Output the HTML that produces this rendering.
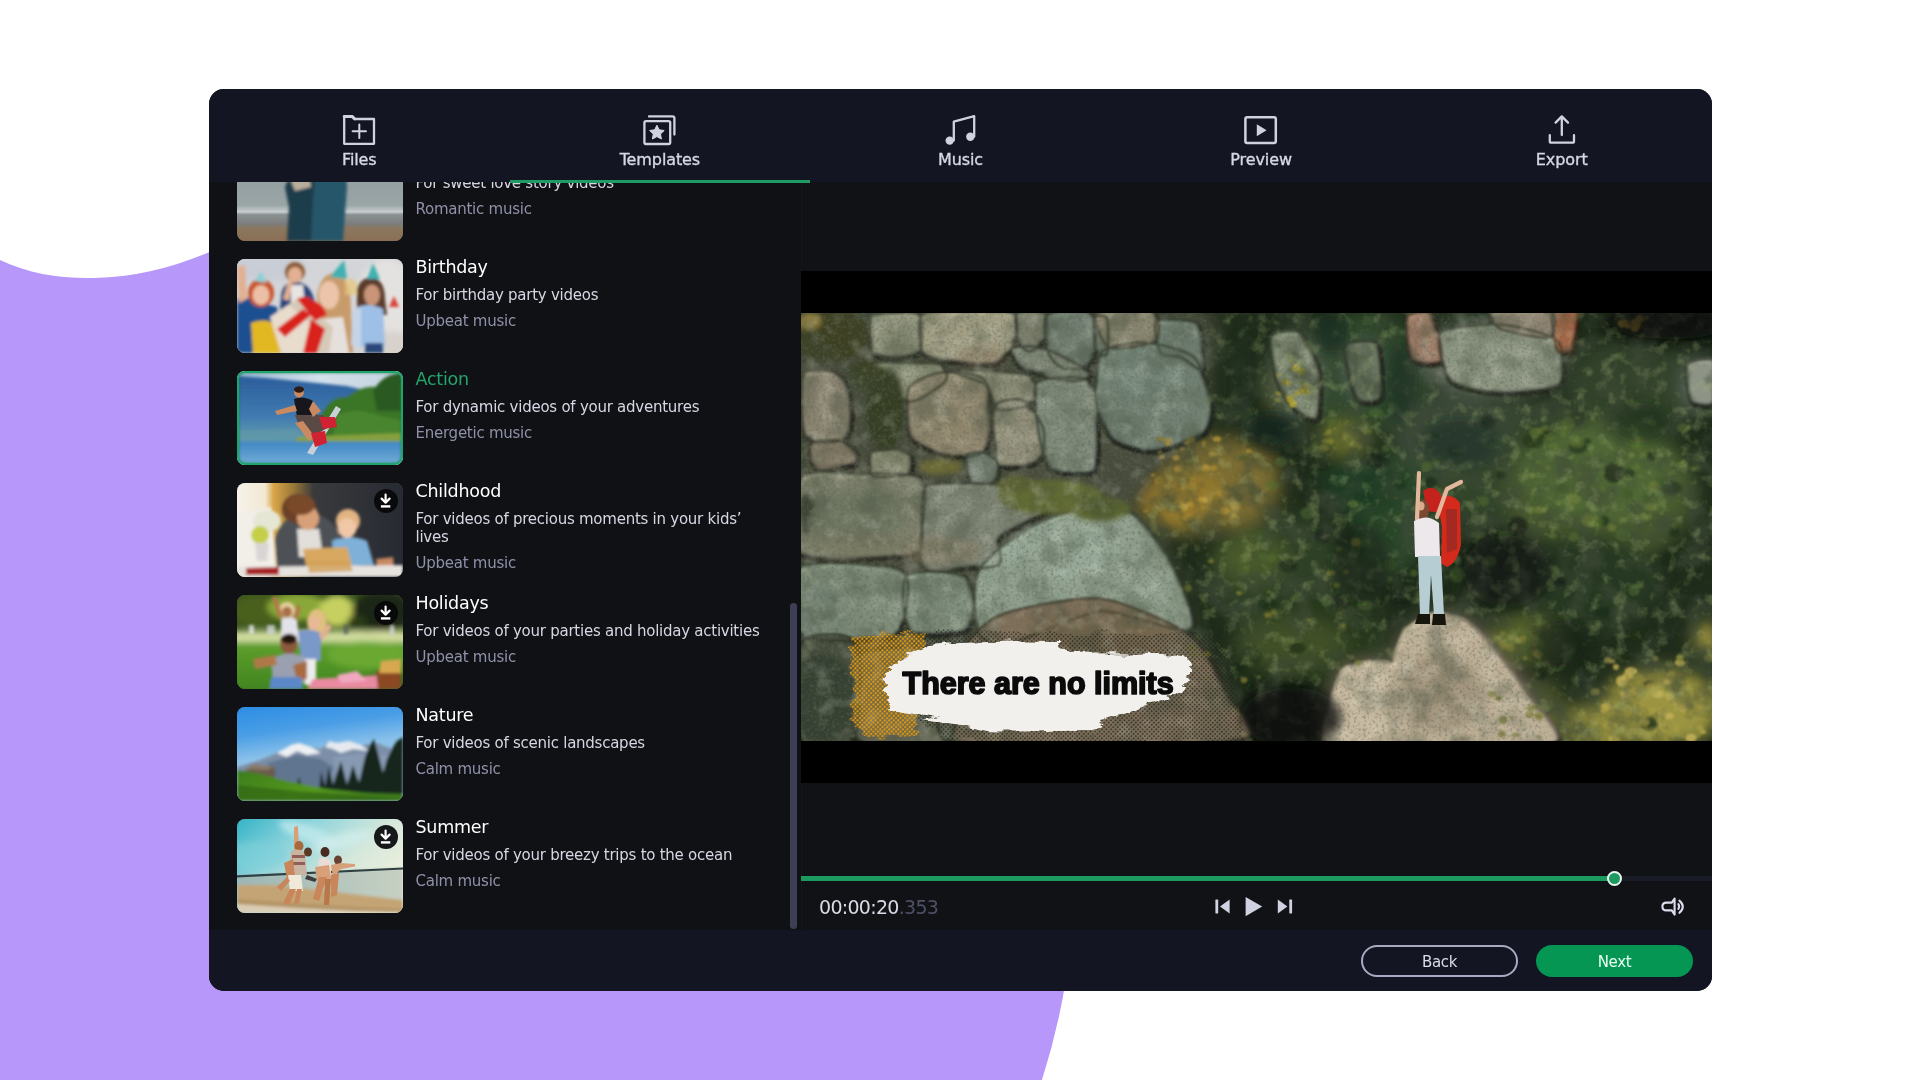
<!DOCTYPE html>
<html lang="en">
<head>
<meta charset="utf-8">
<title>Video editor – Templates</title>
<style>
*{box-sizing:border-box;margin:0;padding:0}
html,body{width:1920px;height:1080px;overflow:hidden;background:#fff}
body{position:relative;font-family:"DejaVu Sans","Liberation Sans",sans-serif;color:#fff}
.abs{position:absolute}
#bg{position:absolute;left:0;top:0;width:1920px;height:1080px}
#win{position:absolute;left:209px;top:89px;width:1503px;height:902px;border-radius:15px;overflow:hidden;background:#111215;will-change:transform}
#nav{position:absolute;left:0;top:0;width:1503px;height:93px;background:#131522}
.tab{position:absolute;top:0;width:300.6px;height:93px;text-align:center}
.tab svg{position:absolute;left:50%;top:22px;margin-left:-20px;width:40px;height:40px;overflow:visible}
.tab span{position:absolute;left:0;right:0;top:61px;font-size:16px;line-height:20px;color:#d6d8e7;letter-spacing:-0.1px;font-weight:400;-webkit-text-stroke:0.35px #d6d8e7}
#underline{position:absolute;left:301px;top:91px;width:300px;height:3px;background:#1f9b63;z-index:5}
#list{position:absolute;left:0;top:93px;width:592px;height:748px;background:#101114;overflow:hidden}
.item{position:absolute;left:28px;width:550px;height:94px}
.thumb{position:absolute;left:0;top:0;width:166px;height:94px;border-radius:8px;overflow:hidden;background:#555}
.thumb svg{position:absolute;left:0;top:0;width:166px;height:94px}
.item h3{position:absolute;left:178.5px;top:-4px;font-size:17.5px;line-height:24px;font-weight:400;color:#fff;letter-spacing:-0.25px;white-space:nowrap}
.item p{position:absolute;left:178.5px;top:26.6px;width:350px;font-size:15px;line-height:18px;color:#d6d7e4;letter-spacing:-0.25px}
.item p.m{color:#8f91a9;top:53px;white-space:nowrap}
.item.sel h3{color:#23a56c}
.item.sel .thumb{box-shadow:inset 0 0 0 2px #1fa46a}
.item.sel .thumb::after{content:"";position:absolute;left:0;top:0;right:0;bottom:0;border:2px solid #1fa46a;border-radius:8px;box-shadow:inset 0 0 3px rgba(20,120,80,.8)}
.dl{position:absolute;left:137px;top:6px;width:24px;height:24px;border-radius:12px;background:rgba(8,8,10,.93)}
#divider{position:absolute;left:592px;top:93px;width:1px;height:748px;background:#16171c}
#scroll{position:absolute;left:581px;top:421px;width:7px;height:326px;border-radius:4px;background:#3d3f57}
#prev{position:absolute;left:592px;top:93px;width:911px;height:748px;background:#111215}
#video{position:absolute;left:592px;top:182px;width:911px;height:512px;background:#000}
#frame{position:absolute;left:592px;top:224px;width:911px;height:428px;overflow:hidden;background:#4a5a3a}
#frame svg{position:absolute;left:0;top:0;width:911px;height:428px}
#track{position:absolute;left:592px;top:787px;width:911px;height:5px;background:#191b27}
#prog{position:absolute;left:592px;top:787px;width:813px;height:5px;background:#1c9a60;border-radius:0 3px 3px 0}
#knob{position:absolute;left:1398px;top:782px;width:15px;height:15px;border-radius:50%;background:#1c9a60;border:2.5px solid #e9f6ef}
#time{position:absolute;left:610px;top:806px;font-size:19px;line-height:24px;letter-spacing:-0.7px;color:#d9dbe6}
#time i{font-style:normal;color:#4e5166}
#bar{position:absolute;left:0;top:841px;width:1503px;height:61px;background:#131522}
.btn{position:absolute;top:855.5px;height:32.5px;width:157px;border-radius:17px;font-size:15px;line-height:35px;text-align:center;color:#e8fff2;letter-spacing:-0.3px}
#back{left:1152px;border:2px solid #a9aac2;line-height:31px;color:#dcddea}
#next{left:1327px;background:#069654}
.ctl{position:absolute;overflow:visible}
</style>
</head>
<body>
<svg id="bg" viewBox="0 0 1920 1080">
  <rect width="1920" height="1080" fill="#ffffff"/>
  <path d="M0,260 C30,274 62,279 95,278 C135,277 172,268 212,251 L1100,251 L1066.5,975 Q1058.8,1027.5 1041.9,1080 L0,1080 Z" fill="#b897fb"/>
</svg>

<div id="win">
  <div id="list">
    <!-- items inserted below -->
    <div class="item" style="top:-35px">
      <div class="thumb" id="t0"><svg viewBox="0 0 166 94" width="166" height="94" preserveAspectRatio="none">
<defs>
<filter id="t0b3" x="-20%" y="-20%" width="140%" height="140%"><feGaussianBlur stdDeviation="3"/></filter>
<filter id="t0b15" x="-20%" y="-20%" width="140%" height="140%"><feGaussianBlur stdDeviation="1.5"/></filter>
<filter id="t0b07" x="-20%" y="-20%" width="140%" height="140%"><feGaussianBlur stdDeviation="0.7"/></filter>
<linearGradient id="t0g" x1="0" y1="0" x2="0" y2="1"><stop offset="0" stop-color="#8d999c"/><stop offset="0.62" stop-color="#9aa5a6"/><stop offset="0.69" stop-color="#c9cfcf"/><stop offset="0.72" stop-color="#8b9192"/><stop offset="0.82" stop-color="#7b7d7c"/><stop offset="0.86" stop-color="#8c775f"/><stop offset="1" stop-color="#8a6f56"/></linearGradient>
</defs>
<rect x="0" y="0" width="166" height="94" fill="url(#t0g)"/>
<g filter="url(#t0b15)">
<path d="M48,40 Q52,28 62,26 L74,28 Q80,34 82,48 L84,94 L50,94 L52,60 Z" fill="#1d3c4c"/>
<path d="M78,30 Q86,18 100,20 Q110,24 110,40 L106,94 L74,94 L76,56 Z" fill="#27566a"/>
<path d="M54,34 Q60,24 72,28 L74,40 L58,44 Z" fill="#b9ae9c"/>
<ellipse cx="68" cy="26" rx="6" ry="7" fill="#3a2a22"/>
<ellipse cx="84" cy="22" rx="7" ry="8" fill="#2a2420"/>
</g>
</svg></div>
      <h3>Love story</h3>
      <p style="white-space:nowrap">For sweet love story videos</p>
      <p class="m">Romantic music</p>
    </div>
    <div class="item" style="top:77px">
      <div class="thumb" id="t1"><svg viewBox="0 0 166 94" width="166" height="94" preserveAspectRatio="none">
<defs>
<filter id="t1b3" x="-20%" y="-20%" width="140%" height="140%"><feGaussianBlur stdDeviation="3"/></filter>
<filter id="t1b15" x="-20%" y="-20%" width="140%" height="140%"><feGaussianBlur stdDeviation="1.5"/></filter>
<filter id="t1b07" x="-20%" y="-20%" width="140%" height="140%"><feGaussianBlur stdDeviation="0.7"/></filter>

</defs>
<rect x="0" y="0" width="166" height="94" fill="#d3d5d9"/>
<g filter="url(#t1b3)">
<ellipse cx="150" cy="40" rx="30" ry="40" fill="#e4e2e0"/>
<ellipse cx="30" cy="8" rx="40" ry="14" fill="#c9cdd6"/>
<ellipse cx="150" cy="86" rx="30" ry="14" fill="#d8d2cc"/>
</g>
<g filter="url(#t1b15)">
<path d="M44,40 Q44,24 58,22 Q74,24 78,44 L78,60 L42,60 Z" fill="#27457a"/>
<path d="M54,26 L66,26 L68,46 L54,46 Z" fill="#e8e4e2"/>
<ellipse cx="58" cy="13" rx="10" ry="10" fill="#8a5a34"/>
<ellipse cx="58" cy="16" rx="7" ry="8" fill="#e2b092"/>
<path d="M46,40 L52,20 L56,22 L52,42 Z" fill="#e2b092"/>
<path d="M0,40 Q10,36 18,42 L40,48 L44,70 L36,94 L0,94 Z" fill="#1e4f8f"/>
<path d="M14,64 Q28,58 40,66 L46,94 L16,94 Z" fill="#e2b820"/>
<path d="M0,8 L8,6 L10,40 L2,44 Z" fill="#e2b092"/>
<ellipse cx="24" cy="34" rx="13" ry="14" fill="#c8552a"/>
<ellipse cx="24" cy="36" rx="8.5" ry="10" fill="#ecc0a6"/>
<path d="M18,22 L24,12 L30,24 Z" fill="#8fd0d4"/>
<path d="M80,36 Q84,14 98,14 Q114,18 114,50 L116,94 L84,94 Z" fill="#c89b6a"/>
<ellipse cx="92" cy="36" rx="10" ry="14" fill="#ecc4aa"/>
<path d="M84,60 L106,58 L112,94 L84,94 Z" fill="#e6e0dc"/>
<path d="M93,18 L107,1 L110,20 Z" fill="#3fb0b0"/>
<path d="M33,58 L60,40 L96,68 L92,94 L44,94 Z" fill="#e8dccd"/>
<path d="M60,40 L96,68 L92,94 L78,94 L82,72 L52,46 Z" fill="#cfc0ae" opacity="0.7"/>
<path d="M40,70 L66,50 L74,56 L48,78 Z" fill="#d9231f"/>
<path d="M60,40 Q70,34 76,42 Q86,44 90,56 L78,62 Z" fill="#d9231f"/>
<path d="M74,60 L88,70 L80,94 L66,94 Z" fill="#d9231f"/>
<path d="M120,30 Q124,18 136,18 Q148,22 148,40 L150,56 L120,56 Z" fill="#5a3a2a"/>
<ellipse cx="135" cy="36" rx="8" ry="10.5" fill="#c99477"/>
<path d="M118,50 Q130,42 146,50 L148,88 L118,88 Z" fill="#9ec0e6"/>
<path d="M116,52 L124,48 L124,90 L114,86 Z" fill="#c6d4e8"/>
<path d="M128,84 L146,84 L146,94 L128,94 Z" fill="#2b4a7a"/>
<path d="M130,20 L136,4 L143,20 Z" fill="#3fb0b0"/>
<path d="M152,48 L157,37 L162,48 Z" fill="#d9433a"/>
<path d="M108,22 Q114,16 120,24 L120,36 L108,36 Z" fill="#e8c878" opacity="0.7"/>
</g>
</svg></div>
      <h3>Birthday</h3>
      <p>For birthday party videos</p>
      <p class="m">Upbeat music</p>
    </div>
    <div class="item sel" style="top:189px">
      <div class="thumb" id="t2"><svg viewBox="0 0 166 94" width="166" height="94" preserveAspectRatio="none">
<defs>
<filter id="t2b3" x="-20%" y="-20%" width="140%" height="140%"><feGaussianBlur stdDeviation="3"/></filter>
<filter id="t2b15" x="-20%" y="-20%" width="140%" height="140%"><feGaussianBlur stdDeviation="1.5"/></filter>
<filter id="t2b07" x="-20%" y="-20%" width="140%" height="140%"><feGaussianBlur stdDeviation="0.7"/></filter>
<linearGradient id="t2sky" x1="0" y1="0" x2="1" y2="0"><stop offset="0" stop-color="#9bb8d4"/><stop offset="0.5" stop-color="#d4e0ea"/><stop offset="1" stop-color="#c2d2e0"/></linearGradient><linearGradient id="t2m" x1="0" y1="0" x2="0" y2="1"><stop offset="0" stop-color="#2b5d9c"/><stop offset="0.6" stop-color="#3f7ab0"/><stop offset="1" stop-color="#6aa0ac"/></linearGradient><linearGradient id="t2w" x1="0" y1="0" x2="0" y2="1"><stop offset="0" stop-color="#3f86c4"/><stop offset="1" stop-color="#74afd9"/></linearGradient>
</defs>
<rect x="0" y="0" width="166" height="94" fill="url(#t2sky)"/>
<g filter="url(#t2b15)">
<path d="M0,5 L30,7 L70,11 L110,15 L140,22 L166,30 L166,72 L0,72 Z" fill="url(#t2m)"/>
<path d="M86,40 Q96,24 110,26 Q124,14 140,16 Q150,2 166,4 L166,70 L70,70 Z" fill="#3a7428"/>
<path d="M136,20 Q146,2 166,2 L166,40 L140,40 Z" fill="#2a5a20"/>
<path d="M100,44 Q120,36 140,44 L166,50 L166,66 L96,66 Z" fill="#4e8a30" opacity="0.8"/>
<path d="M58,66 L166,62 L166,72 L58,72 Z" fill="#86a03c"/>
<path d="M0,60 L60,58 L60,70 L0,70 Z" fill="#5f97a8" opacity="0.8"/>
<rect x="0" y="70.5" width="166" height="24" fill="url(#t2w)"/>
</g>
<g filter="url(#t2b07)">
<path d="M99,35 L104,38 L76,84 L70,82 Z" fill="#c9d0d8"/>
<path d="M57,28 Q66,24 76,30 L80,44 L60,46 Z" fill="#15151a"/>
<path d="M58,44 L86,44 L92,56 L78,64 L64,60 Z" fill="#5a4a44"/>
<path d="M58,52 L66,50 L78,66 L72,70 Z" fill="#c98a62"/>
<path d="M76,30 L84,40 L76,46 L72,38 Z" fill="#c98a62"/>
<path d="M38,40 L58,34 L60,40 L40,44 Z" fill="#c98a62"/>
<ellipse cx="62" cy="21" rx="5" ry="5.6" fill="#c98a62"/>
<ellipse cx="62" cy="18.5" rx="5" ry="3.2" fill="#2a1c14"/>
<path d="M82,46 L98,46 L100,56 L86,58 Z" fill="#d02030"/>
<path d="M74,62 L88,60 L90,72 L78,76 Z" fill="#d02030"/>
</g>
</svg></div>
      <h3>Action</h3>
      <p>For dynamic videos of your adventures</p>
      <p class="m">Energetic music</p>
    </div>
    <div class="item" style="top:301px">
      <div class="thumb" id="t3"><svg viewBox="0 0 166 94" width="166" height="94" preserveAspectRatio="none">
<defs>
<filter id="t3b3" x="-20%" y="-20%" width="140%" height="140%"><feGaussianBlur stdDeviation="3"/></filter>
<filter id="t3b15" x="-20%" y="-20%" width="140%" height="140%"><feGaussianBlur stdDeviation="1.5"/></filter>
<filter id="t3b07" x="-20%" y="-20%" width="140%" height="140%"><feGaussianBlur stdDeviation="0.7"/></filter>
<linearGradient id="t3bg" x1="0" y1="0" x2="1" y2="0"><stop offset="0" stop-color="#f6f2ea"/><stop offset="0.17" stop-color="#f2e8d2"/><stop offset="0.22" stop-color="#d9a548"/><stop offset="0.34" stop-color="#9a7838"/><stop offset="0.46" stop-color="#3a3a3c"/><stop offset="1" stop-color="#262a32"/></linearGradient>
</defs>
<rect x="0" y="0" width="166" height="94" fill="url(#t3bg)"/>
<g filter="url(#t3b15)">
<path d="M0,30 L34,24 L40,94 L0,94 Z" fill="#f2eee8"/>
<ellipse cx="30" cy="38" rx="14" ry="11" fill="#e6e6d4"/>
<ellipse cx="23" cy="52" rx="9" ry="9" fill="#c4cf46"/>
<path d="M18,60 L32,60 L30,78 L20,78 Z" fill="#d8d6d4"/>
<path d="M38,56 Q44,34 66,30 Q94,30 102,52 L104,84 L40,86 Z" fill="#4d5157"/>
<path d="M60,46 L82,46 L86,74 L62,74 Z" fill="#e2deda"/>
<ellipse cx="62" cy="26" rx="17" ry="15" fill="#6a4028"/>
<ellipse cx="71" cy="35" rx="11" ry="12" fill="#d8a078"/>
<ellipse cx="64" cy="22" rx="14" ry="10" fill="#7a4a2c"/>
<path d="M95,58 Q112,50 130,58 L137,82 L98,84 Z" fill="#7eb0d8"/>
<ellipse cx="111" cy="38" rx="12" ry="12" fill="#e2b482"/>
<ellipse cx="110" cy="45" rx="9.5" ry="10" fill="#f0c8a8"/>
<path d="M66,66 L110,64 L116,86 L70,88 Z" fill="#d8a860"/>
<path d="M139,76 L156,74 L157,84 L140,85 Z" fill="#c88860"/>
<path d="M0,84 L166,82 L166,94 L0,94 Z" fill="#e6e2de"/>
<path d="M9,85 L42,84 L42,92 L9,92 Z" fill="#a82424"/>
<path d="M70,78 L112,78 L116,88 L72,90 Z" fill="#d2a058" opacity="0.8"/>
</g>
</svg></div>
      <div class="dl"></div>
      <h3>Childhood</h3>
      <p>For videos of precious moments in your kids’ lives</p>
      <p class="m" style="top:71px">Upbeat music</p>
    </div>
    <div class="item" style="top:413px">
      <div class="thumb" id="t4"><svg viewBox="0 0 166 94" width="166" height="94" preserveAspectRatio="none">
<defs>
<filter id="t4b3" x="-20%" y="-20%" width="140%" height="140%"><feGaussianBlur stdDeviation="3"/></filter>
<filter id="t4b15" x="-20%" y="-20%" width="140%" height="140%"><feGaussianBlur stdDeviation="1.5"/></filter>
<filter id="t4b07" x="-20%" y="-20%" width="140%" height="140%"><feGaussianBlur stdDeviation="0.7"/></filter>
<linearGradient id="t4g" x1="0" y1="0" x2="0" y2="1"><stop offset="0" stop-color="#5fa02c"/><stop offset="1" stop-color="#3f8420"/></linearGradient>
</defs>
<rect x="0" y="0" width="166" height="94" fill="#38541c"/>
<g filter="url(#t4b3)">
<ellipse cx="20" cy="16" rx="26" ry="16" fill="#4a5e1c"/>
<ellipse cx="60" cy="12" rx="30" ry="14" fill="#8aa838"/>
<ellipse cx="100" cy="16" rx="18" ry="16" fill="#c6d060"/>
<ellipse cx="145" cy="16" rx="30" ry="20" fill="#1c2812"/>
<ellipse cx="120" cy="28" rx="10" ry="8" fill="#2a3a16"/>
<rect x="-5" y="36" width="180" height="11" fill="#d4dea0"/>
<rect x="-5" y="47" width="180" height="50" fill="url(#t4g)"/>
<ellipse cx="130" cy="60" rx="40" ry="14" fill="#6aa832"/>
<ellipse cx="150" cy="88" rx="30" ry="10" fill="#3a6a1c"/>
</g>
<g filter="url(#t4b15)">
<rect x="12" y="30" width="5" height="9" fill="#e8e8f0" opacity="0.8"/>
<rect x="30" y="30" width="8" height="9" fill="#e0e0e8" opacity="0.7"/>
<rect x="107" y="30" width="4" height="9" fill="#5a5a68" opacity="0.8"/>
<rect x="153" y="30" width="4" height="10" fill="#d8d8e0" opacity="0.8"/>
<ellipse cx="80" cy="27" rx="10" ry="13" fill="#e0c080"/>
<ellipse cx="77" cy="28" rx="5.5" ry="7" fill="#e8b898"/>
<path d="M61,36 Q72,32 84,38 L84,66 L64,66 Z" fill="#7a98c8"/>
<path d="M67,64 L79,64 L79,90 L68,90 Z" fill="#ececec"/>
<path d="M82,40 L92,28 L95,32 L86,46 Z" fill="#e0b090"/>
<path d="M44,24 Q52,20 60,24 L62,46 L44,46 Z" fill="#e2e2ea"/>
<ellipse cx="50" cy="15" rx="8" ry="8" fill="#e8d0a0"/>
<ellipse cx="50" cy="17" rx="5" ry="5.5" fill="#a8704a"/>
<path d="M35,2 L40,2 L46,22 L42,24 Z" fill="#b07848"/>
<path d="M56,22 L60,10 L64,12 L60,26 Z" fill="#b07848"/>
<ellipse cx="52" cy="49" rx="8.5" ry="10.5" fill="#8a5a3a"/>
<ellipse cx="52" cy="44" rx="8" ry="5" fill="#241810"/>
<path d="M34,64 Q50,54 68,62 L68,88 L36,88 Z" fill="#9aa0b0"/>
<path d="M16,64 L38,60 L40,70 L18,74 Z" fill="#b07848"/>
<path d="M56,70 L70,66 L70,84 L60,86 Z" fill="#a86a40"/>
<path d="M34,82 L64,82 L66,94 L32,94 Z" fill="#5a88c8"/>
<path d="M76,84 L144,80 L150,94 L70,94 Z" fill="#e88aa0"/>
<path d="M100,80 L120,76 L130,86 L104,88 Z" fill="#f0a8c0"/>
<path d="M139,76 L164,74 L164,94 L141,94 Z" fill="#8a4a20"/>
<path d="M144,66 L164,64 L164,78 L142,78 Z" fill="#d8a850"/>
</g>
</svg></div>
      <div class="dl"></div>
      <h3>Holidays</h3>
      <p style="white-space:nowrap">For videos of your parties and holiday activities</p>
      <p class="m">Upbeat music</p>
    </div>
    <div class="item" style="top:525px">
      <div class="thumb" id="t5"><svg viewBox="0 0 166 94" width="166" height="94" preserveAspectRatio="none">
<defs>
<filter id="t5b3" x="-20%" y="-20%" width="140%" height="140%"><feGaussianBlur stdDeviation="3"/></filter>
<filter id="t5b15" x="-20%" y="-20%" width="140%" height="140%"><feGaussianBlur stdDeviation="1.5"/></filter>
<filter id="t5b07" x="-20%" y="-20%" width="140%" height="140%"><feGaussianBlur stdDeviation="0.7"/></filter>
<linearGradient id="t5s" x1="0" y1="0" x2="0.25" y2="1"><stop offset="0" stop-color="#2d8de3"/><stop offset="0.3" stop-color="#4a9ee6"/><stop offset="0.55" stop-color="#8cc2ea"/><stop offset="1" stop-color="#a8d0ee"/></linearGradient><linearGradient id="t5g" x1="0" y1="0" x2="1" y2="0.4"><stop offset="0" stop-color="#3c7c1c"/><stop offset="0.6" stop-color="#56981f"/><stop offset="1" stop-color="#3f7a1a"/></linearGradient>
</defs>
<rect x="0" y="0" width="166" height="94" fill="url(#t5s)"/>
<g filter="url(#t5b15)">
<path d="M0,60 L20,54 L40,46 L54,38 L62,36 L74,40 L84,42 L92,34 L100,36 L112,34 L124,38 L140,36 L150,40 L166,44 L166,90 L0,90 Z" fill="#7d8fa8"/>
<path d="M40,46 L54,38 L62,36 L74,40 L84,46 L70,48 L60,44 L50,50 Z" fill="#eef1f4"/>
<path d="M88,40 L92,34 L100,36 L112,34 L124,38 L132,44 L116,42 L104,46 L96,42 Z" fill="#e6eaf0"/>
<path d="M30,56 L60,48 L84,52 L96,60 L90,80 L40,80 Z" fill="#5c708c" opacity="0.85"/>
<path d="M96,50 L130,46 L166,50 L166,70 L100,72 Z" fill="#8a9cb4" opacity="0.8"/>
<path d="M82,84 L84,64 L88,80 L92,60 L96,78 L104,54 L110,78 L116,58 L122,76 L128,50 L132,40 L137,32 L142,50 L146,66 L150,52 L156,40 L160,34 L166,30 L166,90 L82,90 Z" fill="#13251a"/>
<path d="M58,82 L62,70 L66,82 Z" fill="#1f3a1c"/>
<path d="M7,64 L16,57 L38,60 L38,72 L22,72 L10,68 Z" fill="#6a5a4a"/>
<path d="M7,64 L16,57 L38,60 L30,63 L14,62 Z" fill="#8a7c6a"/>
<path d="M0,63 L20,66 L50,74 L90,82 L130,86 L166,87 L166,94 L0,94 Z" fill="url(#t5g)"/>
<path d="M0,78 L60,84 L166,92 L166,94 L0,94 Z" fill="#2f6416" opacity="0.7"/>
</g>
</svg></div>
      <h3>Nature</h3>
      <p>For videos of scenic landscapes</p>
      <p class="m">Calm music</p>
    </div>
    <div class="item" style="top:637px">
      <div class="thumb" id="t6"><svg viewBox="0 0 166 94" width="166" height="94" preserveAspectRatio="none">
<defs>
<filter id="t6b3" x="-20%" y="-20%" width="140%" height="140%"><feGaussianBlur stdDeviation="3"/></filter>
<filter id="t6b15" x="-20%" y="-20%" width="140%" height="140%"><feGaussianBlur stdDeviation="1.5"/></filter>
<filter id="t6b07" x="-20%" y="-20%" width="140%" height="140%"><feGaussianBlur stdDeviation="0.7"/></filter>
<linearGradient id="t6s" x1="0" y1="0" x2="1" y2="0.6"><stop offset="0" stop-color="#35b4c6"/><stop offset="0.35" stop-color="#8fd4dc"/><stop offset="0.7" stop-color="#d6e8dc"/><stop offset="1" stop-color="#eef0dc"/></linearGradient><linearGradient id="t6w" x1="0" y1="0" x2="1" y2="0"><stop offset="0" stop-color="#9cb6b4"/><stop offset="1" stop-color="#c6d0c2"/></linearGradient>
</defs>
<rect x="0" y="0" width="166" height="94" fill="url(#t6s)"/>
<g filter="url(#t6b3)">
<ellipse cx="70" cy="14" rx="30" ry="8" fill="#c8ecf0" opacity="0.7" transform="rotate(20 70 14)"/>
<ellipse cx="105" cy="22" rx="30" ry="7" fill="#d4f0ee" opacity="0.7" transform="rotate(-15 105 22)"/>
<ellipse cx="20" cy="36" rx="30" ry="14" fill="#7fd0d8" opacity="0.6"/>
</g>
<g filter="url(#t6b15)">
<path d="M0,57 L166,49 L166,94 L0,94 Z" fill="url(#t6w)"/>
<path d="M0,66 L40,66 L90,72 L140,78 L166,81 L166,94 L0,94 Z" fill="#c4a474"/>
<path d="M0,80 L60,84 L120,88 L166,90 L166,94 L0,94 Z" fill="#b39466"/>
<path d="M0,85 L60,89 L120,92 L166,93 L166,94 L0,94 Z" fill="#e8e0d0" opacity="0.75"/>
</g>
<g filter="url(#t6b07)">
<path d="M0,56.2 L166,48.6 L166,50.4 L0,58.4 Z" fill="#2f3f42"/>
<path d="M57,8 L61,7 L62,30 L57,32 Z" fill="#d8a078"/>
<ellipse cx="62" cy="27" rx="4.5" ry="5" fill="#a8683c"/>
<path d="M54,32 Q62,28 68,34 L70,56 L52,56 Z" fill="#c8b4a0"/>
<path d="M55,36 L68,36 L68,39 L55,39 Z M55,43 L68,43 L68,46 L55,46 Z" fill="#7a3a3a" opacity="0.7"/>
<ellipse cx="71" cy="33" rx="4" ry="4.5" fill="#5a3828"/>
<path d="M47,44 L56,40 L58,58 L50,60 Z" fill="#c8865a"/>
<path d="M51,56 L64,56 L66,72 L53,72 Z" fill="#f0e8d8"/>
<path d="M53,70 L59,70 L52,86 L46,84 Z" fill="#c8865a"/>
<path d="M60,70 L65,70 L62,84 L57,86 Z" fill="#c8865a"/>
<path d="M40,68 L50,58 L53,62 L44,72 Z" fill="#c8865a"/>
<ellipse cx="88" cy="33" rx="4.5" ry="5" fill="#4a2c20"/>
<path d="M82,40 Q88,36 94,42 L94,56 L80,56 Z" fill="#e8dcd4"/>
<path d="M78,48 L92,46 L94,60 L80,62 Z" fill="#d8a078"/>
<path d="M82,58 L90,58 L82,82 L76,80 Z" fill="#c8865a"/>
<path d="M88,60 L94,60 L92,86 L87,86 Z" fill="#b8764a"/>
<ellipse cx="101" cy="41" rx="4" ry="4.6" fill="#6a4030"/>
<path d="M94,46 L104,44 L118,45 L118,47.5 L104,50 L96,58 Z" fill="#d8a078"/>
<path d="M94,56 L102,54 L100,76 L94,78 Z" fill="#c8865a"/>
<path d="M70,56 L80,60 L78,63 L68,60 Z" fill="#3a3a40"/>
</g>
</svg></div>
      <div class="dl"></div>
      <h3>Summer</h3>
      <p>For videos of your breezy trips to the ocean</p>
      <p class="m">Calm music</p>
    </div>
    <div id="scroll"></div>
  </div>

  <div id="prev"></div>
  <div id="divider"></div>
  <div id="video"></div>
  <div id="frame"><svg viewBox="0 0 911 428" width="911" height="428" preserveAspectRatio="none">
<defs>
<filter id="fb9" x="-20%" y="-20%" width="140%" height="140%"><feGaussianBlur stdDeviation="9"/></filter>
<filter id="fb5" x="-20%" y="-20%" width="140%" height="140%"><feGaussianBlur stdDeviation="5"/></filter>
<filter id="fb3" x="-20%" y="-20%" width="140%" height="140%"><feGaussianBlur stdDeviation="2.6"/></filter>
<filter id="fb1" x="-20%" y="-20%" width="140%" height="140%"><feGaussianBlur stdDeviation="1.2"/></filter>
<filter id="fb06" x="-20%" y="-20%" width="140%" height="140%"><feGaussianBlur stdDeviation="0.6"/></filter>
<filter id="bump" x="-2%" y="-2%" width="104%" height="104%" color-interpolation-filters="sRGB">
  <feGaussianBlur in="SourceAlpha" stdDeviation="2.6" result="a"/>
  <feDiffuseLighting in="a" surfaceScale="11" diffuseConstant="1.0" lighting-color="#ffffff" result="l"><feDistantLight azimuth="240" elevation="58"/></feDiffuseLighting>
  <feComposite in="SourceGraphic" in2="l" operator="arithmetic" k1="0.82" k2="0.30" k3="0" k4="0" result="lit"/>
  <feComposite in="lit" in2="SourceAlpha" operator="in" result="c"/>
  <feGaussianBlur in="c" stdDeviation="1.1"/>
</filter>
<filter id="texD" x="0" y="0" width="100%" height="100%"><feTurbulence type="fractalNoise" baseFrequency="0.035" numOctaves="4" seed="3"/><feColorMatrix type="matrix" values="0 0 0 0 0.05  0 0 0 0 0.07  0 0 0 0 0.04  3.2 0 0 0 -1.35"/></filter>
<filter id="texL" x="0" y="0" width="100%" height="100%"><feTurbulence type="fractalNoise" baseFrequency="0.06" numOctaves="4" seed="11"/><feColorMatrix type="matrix" values="0 0 0 0 0.78  0 0 0 0 0.80  0 0 0 0 0.68  0 3.0 0 0 -1.45"/></filter>
<filter id="texG" x="0" y="0" width="100%" height="100%"><feTurbulence type="fractalNoise" baseFrequency="0.32" numOctaves="2" seed="8"/><feColorMatrix type="matrix" values="0 0 0 0 0.12  0 0 0 0 0.13  0 0 0 0 0.10  2.6 0 0 0 -1.25"/></filter>
<filter id="texF" x="0" y="0" width="100%" height="100%"><feTurbulence type="fractalNoise" baseFrequency="0.075" numOctaves="3" seed="21"/><feColorMatrix type="matrix" values="0 0 0 0 0.40  0 0 0 0 0.48  0 0 0 0 0.19  0 3.4 0 0 -1.75"/></filter>
<filter id="rough" x="-5%" y="-20%" width="110%" height="140%"><feTurbulence type="fractalNoise" baseFrequency="0.045 0.16" numOctaves="3" seed="5" result="n"/><feDisplacementMap in="SourceGraphic" in2="n" scale="13" xChannelSelector="R" yChannelSelector="G"/></filter>
<pattern id="dots" width="3.2" height="3.2" patternUnits="userSpaceOnUse" patternTransform="rotate(45)"><circle cx="1.6" cy="1.6" r="1.15" fill="#e39a12"/></pattern>
<pattern id="dotsk" width="3.2" height="3.2" patternUnits="userSpaceOnUse" patternTransform="rotate(45)"><circle cx="1.6" cy="1.6" r="0.95" fill="#20221c"/></pattern>
<mask id="mrocks" maskUnits="userSpaceOnUse" x="0" y="0" width="911" height="428"><g filter="url(#fb5)" fill="#fff"><path d="M0,0 L412,0 L408,60 L400,116 L350,164 L330,196 L368,250 L392,320 L426,380 L440,428 L0,428 Z"/><path d="M526,428 L530,385 L542,356 L570,348 L592,352 L603,318 L632,300 L664,306 L690,330 L730,382 L754,428 Z"/><path d="M608,0 L776,0 L772,40 L760,78 L700,84 L640,72 L608,50 Z"/><path d="M470,24 L500,20 L520,60 L518,108 L496,100 L476,70 Z"/></g></mask>
<mask id="mforest" maskUnits="userSpaceOnUse" x="0" y="0" width="911" height="428"><rect width="911" height="428" fill="#fff"/><g filter="url(#fb5)" fill="#000"><path d="M0,0 L412,0 L408,60 L400,116 L350,164 L330,196 L368,250 L392,320 L426,380 L440,428 L0,428 Z"/><path d="M526,428 L530,385 L542,356 L570,348 L592,352 L603,318 L632,300 L664,306 L690,330 L730,382 L754,428 Z"/><path d="M608,0 L776,0 L772,40 L760,78 L700,84 L640,72 L608,50 Z"/></g></mask>
<clipPath id="rocksall"><path d="M0,0 L418,0 L412,60 L404,118 L352,168 L334,196 L372,250 L396,320 L430,380 L444,428 L0,428 Z"/><path d="M526,428 L530,385 L542,356 L570,348 L592,352 L603,318 L632,300 L664,306 L690,330 L730,382 L754,428 Z"/><path d="M608,0 L776,0 L772,40 L760,78 L700,84 L640,72 L608,50 Z"/><path d="M470,24 L500,20 L520,60 L518,108 L496,100 L476,70 Z"/></clipPath>
<clipPath id="forestclip"><path d="M418,0 L911,0 L911,428 L754,428 L730,382 L690,330 L664,306 L632,300 L603,318 L592,352 L570,348 L542,356 L530,385 L526,428 L444,428 L430,380 L396,320 L372,250 L334,196 L352,168 L404,118 L412,60 Z"/></clipPath>
</defs>
<rect width="911" height="428" fill="#1f2c1b"/>
<g filter="url(#fb9)">
<ellipse cx="560" cy="60" rx="70" ry="60" fill="#2f4629"/>
<ellipse cx="700" cy="150" rx="110" ry="60" fill="#33452b"/>
<ellipse cx="800" cy="180" rx="95" ry="70" fill="#46592f"/>
<ellipse cx="835" cy="75" rx="70" ry="50" fill="#33432a"/>
<ellipse cx="860" cy="12" rx="60" ry="22" fill="#151b11"/>
<ellipse cx="480" cy="260" rx="70" ry="60" fill="#2d4026"/>
<ellipse cx="520" cy="330" rx="70" ry="50" fill="#27381f"/>
<ellipse cx="490" cy="405" rx="55" ry="40" fill="#0c1710"/>
<ellipse cx="700" cy="330" rx="70" ry="55" fill="#202e1b"/>
<ellipse cx="780" cy="270" rx="80" ry="50" fill="#283722"/>
<ellipse cx="590" cy="200" rx="40" ry="60" fill="#29462a"/>
<ellipse cx="420" cy="170" rx="60" ry="45" fill="#7a6c32"/>
<ellipse cx="385" cy="190" rx="45" ry="30" fill="#94792f"/>
<ellipse cx="486" cy="70" rx="20" ry="30" fill="#8f8a30"/>
<ellipse cx="543" cy="125" rx="24" ry="16" fill="#70752e"/>
<ellipse cx="845" cy="5" rx="22" ry="12" fill="#b0932c"/>
<ellipse cx="860" cy="395" rx="60" ry="40" fill="#9c9440"/>
<ellipse cx="800" cy="415" rx="40" ry="25" fill="#8f8a3c"/>
<ellipse cx="905" cy="325" rx="10" ry="16" fill="#c3b24c"/>
<ellipse cx="725" cy="325" rx="35" ry="20" fill="#5b672f"/>
<ellipse cx="735" cy="395" rx="30" ry="25" fill="#4f572a"/>
<ellipse cx="450" cy="245" rx="36" ry="24" fill="#495a2c"/>
<ellipse cx="490" cy="330" rx="55" ry="26" fill="#3f5027"/>
<ellipse cx="650" cy="120" rx="60" ry="40" fill="#3a4a38"/>
<ellipse cx="560" cy="170" rx="40" ry="30" fill="#1f3a22"/>
<ellipse cx="870" cy="14" rx="70" ry="24" fill="#11170e"/>
<ellipse cx="705" cy="255" rx="45" ry="40" fill="#172316"/>
<ellipse cx="800" cy="160" rx="80" ry="50" fill="#4f6635"/>
<ellipse cx="600" cy="400" rx="30" ry="30" fill="#15201a"/>
<ellipse cx="470" cy="120" rx="30" ry="20" fill="#1c2c1c"/>
<path d="M0,0 L418,0 L412,60 L404,118 L352,168 L334,196 L372,250 L396,320 L430,380 L444,428 L0,428 Z" fill="#3d4232"/>
<ellipse cx="690" cy="45" rx="74" ry="38" fill="#5a6356"/>
<ellipse cx="495" cy="62" rx="26" ry="44" fill="#566657"/>
<ellipse cx="562" cy="58" rx="18" ry="30" fill="#55655a"/>
<ellipse cx="900" cy="72" rx="16" ry="24" fill="#6c7a70"/>
<path d="M526,428 L530,385 L542,356 L570,348 L592,352 L603,318 L632,300 L664,306 L690,330 L730,382 L754,428 Z" fill="#7a705c"/>
</g>
<path d="M4,0 L404,0 L400,60 L392,112 L344,162 L324,196 L362,250 L386,320 L420,380 L434,428 L0,428 L0,4 Z" fill="#484d3c" filter="url(#fb5)"/>
<g filter="url(#bump)">
<path d="M69.0,3.3 C71.7,-1.7 89.3,-1.0 95.0,-1.2 C100.6,-1.4 116.1,-3.6 118.9,1.2 C121.7,5.9 122.1,35.5 120.0,40.7 C117.8,45.9 105.8,46.9 100.2,47.2 C94.7,47.4 74.6,47.7 71.1,42.8 C67.5,37.8 66.3,8.3 69.0,3.3 Z" fill="#8e927a"/>
<path d="M119.9,1.5 C124.3,-3.7 149.1,-2.9 159.7,-3.2 C170.2,-3.4 206.8,-4.1 213.0,-0.6 C219.3,3.0 217.0,22.0 215.2,28.1 C213.4,34.1 204.3,50.2 196.9,52.8 C189.4,55.4 157.9,52.2 149.3,51.0 C140.7,49.8 124.2,48.0 120.9,42.4 C117.5,36.8 115.5,6.6 119.9,1.5 Z" fill="#a29f85"/>
<path d="M215.3,-1.0 C218.5,-4.3 241.5,-4.3 244.7,-1.0 C248.0,2.4 245.9,24.1 244.0,28.7 C242.1,33.2 231.1,39.2 227.9,39.2 C224.7,39.2 217.5,33.3 216.0,28.7 C214.6,24.2 212.0,2.4 215.3,-1.0 Z" fill="#7f826f"/>
<path d="M245.3,1.1 C250.3,-3.4 285.3,-6.6 290.7,-0.9 C296.1,4.7 296.2,44.3 292.9,50.8 C289.6,57.3 267.1,57.6 261.8,56.2 C256.4,54.8 247.8,44.7 245.9,38.5 C244.0,32.2 240.2,5.5 245.3,1.1 Z" fill="#727f72"/>
<path d="M208.9,35.6 C210.5,32.7 229.1,32.2 235.3,33.1 C241.4,33.9 256.5,40.2 263.1,43.5 C269.6,46.8 292.3,59.4 293.2,62.3 C294.0,65.2 279.1,69.2 270.9,68.8 C262.7,68.3 227.9,62.1 220.8,58.3 C213.8,54.6 207.2,38.4 208.9,35.6 Z" fill="#7b8373"/>
<path d="M292.5,4.9 C293.9,1.0 304.8,0.8 306.4,4.9 C308.0,9.0 307.7,37.3 306.4,41.1 C305.1,45.0 296.2,43.2 294.6,39.1 C293.1,35.0 291.2,8.8 292.5,4.9 Z" fill="#747f72"/>
<path d="M1.2,61.2 C4.2,53.4 24.8,55.9 30.0,56.8 C35.2,57.7 44.1,64.1 46.7,69.1 C49.4,74.0 53.1,93.9 53.1,100.5 C53.1,107.1 52.1,124.3 46.5,127.1 C40.8,129.9 8.4,132.4 3.3,125.0 C-1.9,117.5 -1.9,68.9 1.2,61.2 Z" fill="#8a8471"/>
<path d="M66.9,51.6 C69.7,47.8 91.1,48.9 99.5,48.9 C107.9,48.9 135.9,49.4 141.1,51.6 C146.3,53.7 148.5,63.8 145.2,68.1 C141.9,72.3 120.2,87.5 112.3,89.2 C104.3,90.8 80.1,86.8 74.9,82.6 C69.8,78.3 64.1,55.4 66.9,51.6 Z" fill="#898f75"/>
<path d="M107.0,75.3 C110.5,67.6 131.0,59.7 139.8,58.8 C148.6,57.9 179.3,58.6 184.9,67.2 C190.5,75.8 192.9,125.8 188.9,134.7 C185.0,143.7 159.2,147.1 150.1,146.2 C141.0,145.3 113.9,134.7 109.0,126.7 C104.1,118.6 103.5,83.0 107.0,75.3 Z" fill="#938a72"/>
<path d="M148.9,57.6 C149.4,55.9 180.1,56.2 189.5,56.9 C198.8,57.6 226.2,59.9 231.2,63.7 C236.1,67.5 237.1,86.7 233.1,90.5 C229.1,94.3 201.4,99.3 195.9,97.2 C190.5,95.1 190.1,76.4 184.8,71.9 C179.5,67.4 148.3,59.3 148.9,57.6 Z" fill="#8c8d77"/>
<path d="M193.2,93.1 C196.0,85.5 216.5,84.2 222.1,86.8 C227.8,89.4 241.3,108.5 243.2,115.8 C245.1,123.1 243.8,146.7 238.6,151.0 C233.5,155.3 202.5,160.6 197.4,154.0 C192.2,147.5 190.4,100.7 193.2,93.1 Z" fill="#92907b"/>
<path d="M235.3,69.0 C241.2,63.2 281.2,61.3 288.5,66.9 C295.7,72.5 298.5,107.4 299.2,118.1 C299.9,128.8 300.2,156.4 294.6,161.0 C289.0,165.7 256.1,164.0 249.5,159.1 C243.0,154.2 238.4,128.3 236.8,118.1 C235.2,107.9 229.5,74.8 235.3,69.0 Z" fill="#808b7b"/>
<path d="M8.9,130.5 C12.0,127.1 34.9,125.8 40.4,126.9 C45.9,127.9 55.5,136.8 57.2,139.9 C58.8,143.0 60.0,152.7 55.0,154.6 C50.0,156.5 18.2,159.4 13.0,156.7 C7.8,153.9 5.8,133.9 8.9,130.5 Z" fill="#857c68"/>
<path d="M68.9,139.6 C71.3,136.3 87.3,134.6 92.1,134.8 C96.9,135.0 109.0,138.7 111.1,141.6 C113.3,144.6 115.6,158.1 111.0,160.6 C106.5,163.1 75.8,166.1 71.1,163.7 C66.3,161.4 66.5,142.8 68.9,139.6 Z" fill="#82856d"/>
<path d="M164.0,142.3 C165.9,138.8 182.2,137.5 186.2,138.8 C190.2,140.1 198.0,150.5 199.2,153.9 C200.4,157.3 200.2,167.0 196.8,168.9 C193.4,170.7 172.9,172.9 169.2,169.9 C165.5,166.9 162.1,145.9 164.0,142.3 Z" fill="#808b7f"/>
<path d="M-1.1,163.5 C5.8,154.0 45.9,159.7 59.7,159.8 C73.6,159.9 113.9,158.2 121.0,164.3 C128.1,170.5 123.1,205.3 122.1,214.3 C121.2,223.4 126.8,240.5 112.8,243.9 C98.9,247.2 11.9,252.8 -1.0,243.7 C-13.9,234.5 -8.0,173.0 -1.1,163.5 Z" fill="#7f826d"/>
<path d="M125.0,172.3 C131.8,167.3 167.1,169.3 180.0,169.8 C192.9,170.3 230.8,173.4 239.1,176.4 C247.4,179.5 257.5,191.1 253.2,196.8 C248.9,202.5 207.3,220.4 200.9,226.8 C194.5,233.2 205.2,249.7 196.4,253.1 C187.6,256.5 131.8,261.2 123.1,256.8 C114.4,252.4 119.6,223.7 119.8,214.1 C120.0,204.5 118.2,177.4 125.0,172.3 Z" fill="#828878"/>
<path d="M205.0,229.4 C214.8,222.2 247.6,202.2 261.9,198.8 C276.1,195.4 318.2,193.1 330.8,199.1 C343.4,205.1 366.1,238.3 373.2,251.8 C380.2,265.3 401.3,313.1 393.1,318.5 C384.9,323.8 321.7,297.4 300.9,298.8 C280.0,300.3 223.2,328.4 209.2,330.9 C195.1,333.3 180.9,328.4 177.0,320.6 C173.1,312.8 171.6,272.3 174.8,261.9 C178.0,251.6 195.1,236.5 205.0,229.4 Z" fill="#8f9f8d"/>
<path d="M-1.0,253.4 C10.5,245.8 88.9,250.9 100.9,256.2 C113.0,261.5 106.3,292.2 105.2,300.2 C104.0,308.2 102.9,324.4 90.8,326.9 C78.8,329.4 9.3,330.9 -1.1,322.5 C-11.5,314.2 -12.6,260.9 -1.0,253.4 Z" fill="#7f8d7a"/>
<path d="M105.1,262.2 C111.7,255.8 159.6,257.8 166.9,264.2 C174.1,270.6 175.4,312.4 168.9,318.8 C162.4,325.2 116.4,327.3 109.2,320.9 C101.9,314.4 98.6,268.6 105.1,262.2 Z" fill="#81907f"/>
<path d="M199.0,301.4 C215.0,294.9 278.1,282.3 300.1,284.8 C322.1,287.3 378.7,312.8 393.1,323.6 C407.5,334.4 421.7,368.1 427.2,380.2 C432.6,392.3 472.6,424.8 441.1,430.5 C409.5,436.2 180.9,440.6 148.9,430.5 C116.9,420.5 153.1,356.5 158.8,341.9 C164.5,327.2 182.9,307.9 199.0,301.4 Z" fill="#81715a"/>
<path d="M-0.6,328.9 C5.9,317.4 50.6,317.4 56.6,329.0 C62.6,340.5 59.0,419.5 52.5,431.1 C46.1,442.6 5.4,442.6 -0.6,431.1 C-6.6,419.5 -7.0,340.5 -0.6,328.9 Z" fill="#484e3d"/>
<path d="M57.1,341.2 C68.4,331.0 146.7,331.1 156.9,341.2 C167.1,351.4 158.1,420.7 146.8,430.9 C135.5,441.0 67.3,441.0 57.1,430.8 C47.0,420.7 45.8,351.3 57.1,341.2 Z" fill="#606350"/>
<path d="M299.1,39.2 C304.7,32.3 333.2,28.4 343.8,28.8 C354.5,29.3 385.0,36.2 392.8,43.1 C400.7,50.1 411.8,81.1 413.2,90.1 C414.6,99.1 411.9,116.9 405.0,122.7 C398.1,128.5 362.6,140.5 352.0,141.2 C341.4,141.9 317.7,134.7 311.2,128.9 C304.7,123.1 296.2,100.3 294.8,90.1 C293.4,79.9 293.5,46.2 299.1,39.2 Z" fill="#718173"/>
<path d="M355.2,7.1 C359.7,3.8 393.2,5.2 398.8,11.1 C404.4,17.0 407.0,55.0 404.8,58.9 C402.7,62.7 385.2,47.3 380.0,45.2 C374.8,43.1 361.7,44.7 358.9,40.4 C356.1,36.1 350.6,10.5 355.2,7.1 Z" fill="#6d7d6f"/>
<path d="M294.9,-0.5 C300.1,-4.8 346.2,-6.0 353.0,-2.7 C359.8,0.6 360.3,24.3 355.1,28.5 C349.9,32.8 314.0,38.1 307.1,34.8 C300.3,31.5 289.7,3.7 294.9,-0.5 Z" fill="#898670"/>
<path d="M638.9,19.5 C644.7,12.7 686.6,9.9 700.0,10.8 C713.4,11.7 750.2,20.4 757.1,27.6 C764.1,34.8 767.6,68.2 761.1,74.5 C754.6,80.8 712.7,83.7 700.0,83.2 C687.2,82.7 655.8,77.7 648.9,70.5 C642.0,63.3 633.1,26.3 638.9,19.5 Z" fill="#8d9682"/>
<path d="M605.3,3.0 C607.9,-2.4 628.4,-4.5 632.5,0.9 C636.5,6.3 643.3,45.5 640.7,51.0 C638.1,56.4 613.4,54.5 609.4,49.1 C605.4,43.6 602.7,8.5 605.3,3.0 Z" fill="#9f7d67"/>
<path d="M751.4,-3.0 C754.0,-7.6 776.2,-8.0 778.7,-3.0 C781.2,2.0 776.0,36.6 773.4,41.1 C770.8,45.7 758.0,42.1 755.5,37.1 C753.0,32.1 748.7,1.5 751.4,-3.0 Z" fill="#a76746"/>
<path d="M688.9,-2.4 C694.8,-4.5 744.3,-5.5 751.1,-2.4 C757.9,0.6 755.0,22.5 749.0,24.6 C743.1,26.7 705.7,19.4 698.9,16.4 C692.0,13.3 682.9,-0.3 688.9,-2.4 Z" fill="#928776"/>
<path d="M885.2,51.1 C888.2,46.1 912.2,42.2 915.6,47.0 C919.1,51.7 918.6,88.0 915.6,93.0 C912.7,98.0 892.8,95.8 889.4,91.0 C885.9,86.3 882.3,56.1 885.2,51.1 Z" fill="#8e9587"/>
<path d="M469.3,23.0 C472.2,17.2 494.2,14.6 500.1,18.8 C506.0,23.0 519.1,49.6 521.2,59.8 C523.3,70.0 521.4,104.4 518.5,109.1 C515.7,113.8 500.9,105.6 496.0,101.2 C491.0,96.8 477.9,79.2 474.9,70.4 C471.8,61.5 466.5,28.8 469.3,23.0 Z" fill="#818c75"/>
<path d="M543.2,33.1 C545.8,26.5 574.0,24.8 578.5,30.9 C583.0,37.0 585.2,80.4 582.7,87.0 C580.1,93.6 560.1,95.3 555.6,89.1 C551.2,83.0 540.7,39.7 543.2,33.1 Z" fill="#6e7965"/>
<path d="M523.3,433.0 C515.4,427.5 526.7,393.9 528.8,385.0 C530.9,376.2 536.7,359.3 541.4,355.0 C546.1,350.6 564.5,347.1 570.3,346.8 C576.2,346.6 589.7,343.4 592.9,353.2 C596.1,362.9 606.6,423.9 598.8,432.9 C590.9,442.0 531.2,438.4 523.3,433.0 Z" fill="#c9bba2"/>
<path d="M590.8,354.0 C591.3,340.8 597.4,323.5 602.0,317.3 C606.6,311.1 624.5,300.3 631.5,298.9 C638.5,297.5 657.4,301.4 664.1,304.8 C670.9,308.2 683.3,320.4 690.9,329.2 C698.5,338.0 723.6,370.7 731.1,382.4 C738.6,394.1 772.1,427.0 757.0,432.7 C741.8,438.5 616.1,441.9 597.3,432.9 C578.4,424.0 590.3,367.1 590.8,354.0 Z" fill="#bfb198"/>
</g>
<g filter="url(#fb1)" fill="none" stroke="#1d2017" stroke-width="2.4" stroke-linejoin="round" opacity="0.6">
<path d="M69.7,3.8 C72.3,-1.1 89.5,-0.2 95.0,-0.4 C100.5,-0.6 115.5,-2.9 118.3,1.7 C121.1,6.3 121.4,35.2 119.3,40.2 C117.3,45.3 105.5,46.2 100.1,46.4 C94.7,46.6 75.1,47.1 71.7,42.3 C68.2,37.4 67.0,8.6 69.7,3.8 Z"/>
<path d="M120.6,1.8 C125.0,-3.2 149.5,-2.2 159.9,-2.4 C170.3,-2.6 206.2,-3.6 212.3,-0.2 C218.5,3.3 216.2,22.1 214.4,28.0 C212.6,34.0 203.6,49.8 196.3,52.3 C189.0,54.8 158.2,51.5 149.8,50.3 C141.3,49.2 124.9,47.6 121.6,42.1 C118.3,36.6 116.3,6.9 120.6,1.8 Z"/>
<path d="M215.8,-0.3 C218.9,-3.6 241.1,-3.6 244.2,-0.3 C247.4,2.9 245.2,23.8 243.3,28.2 C241.5,32.6 231.0,38.4 228.0,38.4 C224.9,38.4 218.1,32.6 216.7,28.2 C215.3,23.8 212.6,2.9 215.8,-0.3 Z"/>
<path d="M245.8,1.7 C250.7,-2.7 285.0,-5.8 290.2,-0.3 C295.5,5.2 295.5,43.9 292.3,50.3 C289.1,56.6 267.1,56.8 261.9,55.4 C256.7,54.0 248.5,44.2 246.6,38.2 C244.8,32.1 240.8,6.0 245.8,1.7 Z"/>
<path d="M209.6,35.9 C211.2,33.1 229.8,32.8 235.8,33.7 C241.7,34.6 255.9,40.6 262.4,43.8 C268.8,47.0 291.5,59.3 292.4,62.1 C293.3,64.9 278.3,68.7 270.3,68.3 C262.3,67.8 228.5,61.8 221.6,58.1 C214.7,54.4 208.0,38.6 209.6,35.9 Z"/>
<path d="M292.8,5.6 C294.1,1.9 304.6,1.7 306.1,5.6 C307.6,9.6 307.4,36.7 306.1,40.4 C304.9,44.1 296.4,42.3 294.9,38.4 C293.4,34.4 291.6,9.3 292.8,5.6 Z"/>
<path d="M1.7,61.7 C4.7,54.2 25.0,56.7 30.0,57.6 C35.0,58.5 43.7,64.9 46.2,69.7 C48.8,74.5 52.4,93.7 52.4,100.2 C52.4,106.6 51.7,123.6 46.2,126.4 C40.7,129.1 8.8,131.6 3.8,124.3 C-1.3,117.0 -1.3,69.3 1.7,61.7 Z"/>
<path d="M67.6,51.9 C70.4,48.2 91.6,49.6 99.8,49.6 C108.1,49.6 135.3,49.8 140.4,51.9 C145.4,53.9 147.6,63.9 144.4,68.0 C141.2,72.2 119.9,86.8 112.1,88.4 C104.3,90.0 80.7,86.3 75.6,82.2 C70.6,78.1 64.9,55.6 67.6,51.9 Z"/>
<path d="M107.7,75.8 C111.1,68.2 131.3,60.5 139.9,59.6 C148.6,58.7 178.8,59.3 184.3,67.7 C189.8,76.2 192.2,125.4 188.3,134.2 C184.4,143.0 158.9,146.3 150.0,145.4 C141.1,144.5 114.5,134.1 109.7,126.2 C104.9,118.3 104.2,83.3 107.7,75.8 Z"/>
<path d="M149.6,57.9 C150.1,56.3 180.7,57.0 189.8,57.6 C199.0,58.3 225.6,60.2 230.4,63.9 C235.2,67.6 236.3,86.5 232.4,90.2 C228.5,93.9 201.3,98.5 196.0,96.4 C190.7,94.3 190.9,76.3 185.6,72.0 C180.3,67.6 149.1,59.5 149.6,57.9 Z"/>
<path d="M193.7,93.7 C196.5,86.3 216.5,85.1 222.0,87.6 C227.6,90.1 240.6,108.8 242.4,115.9 C244.2,123.0 243.3,146.1 238.2,150.3 C233.2,154.6 202.8,159.8 197.8,153.3 C192.7,146.9 191.0,101.2 193.7,93.7 Z"/>
<path d="M235.8,69.7 C241.5,64.0 281.1,62.2 288.2,67.6 C295.3,73.1 297.7,107.5 298.4,118.0 C299.1,128.5 299.7,155.8 294.2,160.3 C288.7,164.9 256.3,163.2 249.8,158.4 C243.4,153.6 239.2,128.1 237.6,118.0 C236.0,108.0 230.0,75.4 235.8,69.7 Z"/>
<path d="M9.6,130.8 C12.6,127.6 34.8,126.6 40.1,127.6 C45.4,128.7 54.8,137.0 56.4,140.0 C58.0,143.0 59.2,152.4 54.3,154.2 C49.5,156.1 18.7,158.9 13.7,156.2 C8.6,153.6 6.6,134.1 9.6,130.8 Z"/>
<path d="M69.6,139.9 C71.9,136.7 87.4,135.4 92.0,135.6 C96.7,135.8 108.3,139.1 110.4,141.9 C112.5,144.7 114.7,157.8 110.3,160.2 C106.0,162.6 76.3,165.6 71.7,163.2 C67.1,160.9 67.3,143.0 69.6,139.9 Z"/>
<path d="M164.7,142.8 C166.5,139.4 182.3,138.3 186.1,139.6 C189.9,140.9 197.2,150.7 198.4,154.0 C199.6,157.2 199.5,166.5 196.3,168.3 C193.0,170.0 173.3,172.2 169.7,169.3 C166.1,166.4 162.8,146.1 164.7,142.8 Z"/>
<path d="M-0.4,163.8 C6.5,154.5 46.2,160.5 59.9,160.6 C73.6,160.7 113.4,158.7 120.3,164.8 C127.3,170.8 122.3,205.2 121.4,214.1 C120.5,223.0 126.1,240.0 112.3,243.3 C98.5,246.6 12.4,252.2 -0.3,243.2 C-13.1,234.2 -7.2,173.2 -0.4,163.8 Z"/>
<path d="M125.7,172.8 C132.4,167.9 167.2,170.1 180.0,170.6 C192.8,171.1 230.1,173.8 238.4,176.8 C246.6,179.8 256.7,191.3 252.4,196.9 C248.1,202.5 206.7,220.0 200.3,226.3 C193.9,232.5 204.8,249.0 196.1,252.4 C187.5,255.8 132.3,260.6 123.7,256.3 C115.1,251.9 120.4,223.5 120.6,214.0 C120.8,204.6 118.9,177.7 125.7,172.8 Z"/>
<path d="M205.7,229.8 C215.4,222.7 247.8,203.0 262.0,199.6 C276.1,196.2 317.7,193.8 330.3,199.7 C342.8,205.6 365.4,238.5 372.4,251.9 C379.4,265.4 400.5,312.9 392.4,318.2 C384.2,323.4 321.0,296.9 300.3,298.3 C279.6,299.7 223.6,327.8 209.7,330.3 C195.8,332.8 181.5,327.9 177.7,320.2 C173.8,312.5 172.4,272.2 175.6,262.0 C178.8,251.7 195.9,236.9 205.7,229.8 Z"/>
<path d="M-0.3,253.8 C11.1,246.4 88.4,251.5 100.3,256.7 C112.2,262.0 105.5,292.2 104.4,300.1 C103.3,308.0 102.1,323.8 90.3,326.3 C78.4,328.8 9.9,330.4 -0.4,322.2 C-10.6,314.0 -11.7,261.2 -0.3,253.8 Z"/>
<path d="M105.7,262.7 C112.1,256.4 159.2,258.4 166.3,264.7 C173.4,271.0 174.7,312.0 168.3,318.3 C161.9,324.6 116.8,326.6 109.7,320.3 C102.6,314.0 99.3,269.0 105.7,262.7 Z"/>
<path d="M199.7,301.8 C215.6,295.4 278.2,283.1 300.0,285.6 C321.9,288.1 378.1,313.2 392.4,323.9 C406.7,334.6 421.0,368.0 426.4,380.1 C431.8,392.1 471.7,424.5 440.4,430.2 C409.0,435.9 181.5,440.2 149.6,430.2 C117.8,420.2 153.9,356.5 159.6,342.0 C165.3,327.4 183.7,308.2 199.7,301.8 Z"/>
<path d="M-0.2,329.6 C6.2,318.2 50.3,318.2 56.2,329.7 C62.1,341.1 58.6,418.9 52.2,430.4 C45.8,441.8 5.7,441.8 -0.2,430.4 C-6.1,418.9 -6.6,341.1 -0.2,329.6 Z"/>
<path d="M57.7,341.7 C68.9,331.7 146.3,331.7 156.3,341.7 C166.3,351.8 157.4,420.3 146.3,430.3 C135.1,440.3 67.7,440.3 57.7,430.3 C47.7,420.2 46.5,351.8 57.7,341.7 Z"/>
<path d="M299.7,39.7 C305.2,32.9 333.5,29.2 343.9,29.6 C354.4,30.1 384.5,36.9 392.3,43.7 C400.0,50.6 411.0,81.1 412.4,90.0 C413.8,98.9 411.2,116.5 404.3,122.2 C397.5,127.9 362.5,139.7 352.0,140.4 C341.5,141.1 318.1,134.0 311.7,128.3 C305.3,122.6 297.0,100.1 295.6,90.0 C294.2,80.0 294.2,46.6 299.7,39.7 Z"/>
<path d="M355.7,7.7 C360.1,4.5 392.8,6.0 398.3,11.7 C403.8,17.4 406.3,54.6 404.3,58.3 C402.2,62.0 385.1,46.5 380.0,44.4 C375.0,42.3 362.4,44.3 359.6,40.1 C356.9,36.0 351.3,10.9 355.7,7.7 Z"/>
<path d="M295.6,-0.2 C300.7,-4.3 345.7,-5.4 352.3,-2.2 C359.0,1.0 359.4,24.0 354.4,28.2 C349.3,32.3 314.4,37.5 307.7,34.3 C301.1,31.1 290.6,4.0 295.6,-0.2 Z"/>
<path d="M639.6,19.8 C645.3,13.2 686.8,10.7 700.0,11.6 C713.2,12.5 749.5,20.8 756.4,27.9 C763.2,35.0 766.8,68.0 760.4,74.2 C754.0,80.3 712.5,82.9 700.0,82.4 C687.4,81.9 656.5,77.3 649.6,70.2 C642.8,63.1 633.9,26.5 639.6,19.8 Z"/>
<path d="M605.8,3.7 C608.3,-1.6 628.2,-3.7 632.2,1.6 C636.1,6.9 642.8,45.0 640.2,50.3 C637.7,55.6 613.7,53.6 609.8,48.4 C605.9,43.1 603.2,9.0 605.8,3.7 Z"/>
<path d="M751.8,-2.3 C754.3,-6.7 775.8,-7.2 778.2,-2.3 C780.6,2.5 775.7,36.0 773.1,40.4 C770.6,44.8 758.2,41.2 755.8,36.4 C753.4,31.5 749.2,2.0 751.8,-2.3 Z"/>
<path d="M689.6,-2.1 C695.4,-4.2 743.7,-5.1 750.4,-2.1 C757.0,0.8 754.1,22.1 748.3,24.2 C742.6,26.3 706.3,19.1 699.6,16.1 C693.0,13.1 683.9,-0.1 689.6,-2.1 Z"/>
<path d="M885.7,51.7 C888.6,46.9 911.9,43.1 915.2,47.7 C918.5,52.3 918.1,87.5 915.2,92.3 C912.3,97.2 893.1,95.0 889.8,90.3 C886.5,85.7 882.9,56.5 885.7,51.7 Z"/>
<path d="M469.8,23.7 C472.5,17.9 494.3,15.5 500.0,19.6 C505.8,23.7 518.3,49.9 520.4,59.9 C522.5,70.0 520.9,103.8 518.2,108.4 C515.4,112.9 500.8,104.7 496.0,100.4 C491.2,96.1 478.6,78.8 475.6,70.1 C472.6,61.4 467.0,29.4 469.8,23.7 Z"/>
<path d="M543.7,33.7 C546.3,27.3 573.8,25.7 578.2,31.6 C582.5,37.6 584.7,79.9 582.2,86.3 C579.7,92.8 560.2,94.3 555.9,88.4 C551.5,82.4 541.2,40.1 543.7,33.7 Z"/>
</g>
<g filter="url(#fb5)" clip-path="url(#rocksall)">
<ellipse cx="180" cy="44" rx="24" ry="9" fill="#86705a" opacity="0.5"/>
<ellipse cx="150" cy="115" rx="24" ry="22" fill="#8f826a" opacity="0.4"/>
<ellipse cx="24" cy="96" rx="16" ry="22" fill="#8d8474" opacity="0.3"/>
<ellipse cx="140" cy="238" rx="40" ry="14" fill="#8a7e66" opacity="0.6"/>
<ellipse cx="60" cy="232" rx="50" ry="12" fill="#77765c" opacity="0.5"/>
<ellipse cx="300" cy="320" rx="70" ry="24" fill="#6c5e42" opacity="0.55"/>
<ellipse cx="260" cy="240" rx="60" ry="30" fill="#a4b8aa" opacity="0.4"/>
<ellipse cx="640" cy="380" rx="40" ry="40" fill="#8a7c66" opacity="0.5"/>
<ellipse cx="620" cy="320" rx="24" ry="14" fill="#c0b69e" opacity="0.5"/>
<ellipse cx="60" cy="200" rx="50" ry="24" fill="#5f6a58" opacity="0.45"/>
<ellipse cx="350" cy="60" rx="30" ry="24" fill="#8aa096" opacity="0.35"/>
<ellipse cx="20" cy="300" rx="30" ry="26" fill="#5e7266" opacity="0.4"/>
</g>
<g filter="url(#fb3)">
<ellipse cx="30" cy="22" rx="38" ry="26" fill="#3c3f24"/>
<ellipse cx="84" cy="96" rx="19" ry="42" fill="#343d24"/>
<ellipse cx="64" cy="60" rx="16" ry="14" fill="#3a4226"/>
<ellipse cx="140" cy="154" rx="22" ry="8" fill="#6c6a35"/>
<ellipse cx="250" cy="184" rx="52" ry="17" fill="#646d32"/>
<ellipse cx="300" cy="196" rx="30" ry="12" fill="#58642e"/>
<ellipse cx="215" cy="172" rx="20" ry="9" fill="#5d6430"/>
<ellipse cx="8" cy="8" rx="12" ry="9" fill="#8a7a3a"/>
<ellipse cx="20" cy="385" rx="34" ry="44" fill="#354032"/>
<ellipse cx="6" cy="200" rx="8" ry="20" fill="#3a4230"/>
</g>
<g filter="url(#fb1)">
<g mask="url(#mforest)">
<ellipse cx="579" cy="149" rx="8.6" ry="7.8" fill="#16221a" opacity="0.55"/>
<ellipse cx="466" cy="291" rx="10.4" ry="5.4" fill="#1a2a18" opacity="0.55"/>
<ellipse cx="633" cy="123" rx="4.6" ry="2.5" fill="#1e2d1a" opacity="0.55"/>
<ellipse cx="698" cy="411" rx="8.4" ry="6.6" fill="#16221a" opacity="0.55"/>
<ellipse cx="615" cy="420" rx="4.3" ry="2.8" fill="#1a2a18" opacity="0.55"/>
<ellipse cx="491" cy="139" rx="6.2" ry="3.4" fill="#1a2a18" opacity="0.55"/>
<ellipse cx="700" cy="162" rx="4.7" ry="3.7" fill="#16221a" opacity="0.55"/>
<ellipse cx="724" cy="263" rx="7.7" ry="5.7" fill="#0f1a12" opacity="0.55"/>
<ellipse cx="873" cy="219" rx="5.7" ry="4.9" fill="#1a2a18" opacity="0.55"/>
<ellipse cx="540" cy="288" rx="7.7" ry="6.6" fill="#0f1a12" opacity="0.55"/>
<ellipse cx="561" cy="421" rx="4.8" ry="2.8" fill="#1e2d1a" opacity="0.55"/>
<ellipse cx="588" cy="406" rx="7.0" ry="6.1" fill="#16221a" opacity="0.55"/>
<ellipse cx="701" cy="387" rx="6.2" ry="4.9" fill="#0f1a12" opacity="0.55"/>
<ellipse cx="705" cy="250" rx="9.9" ry="7.3" fill="#0f1a12" opacity="0.55"/>
<ellipse cx="746" cy="120" rx="8.9" ry="5.7" fill="#1e2d1a" opacity="0.55"/>
<ellipse cx="609" cy="319" rx="4.2" ry="2.8" fill="#1e2d1a" opacity="0.55"/>
<ellipse cx="720" cy="262" rx="5.5" ry="3.1" fill="#0f1a12" opacity="0.55"/>
<ellipse cx="542" cy="228" rx="10.1" ry="5.9" fill="#16221a" opacity="0.55"/>
<ellipse cx="617" cy="191" rx="5.0" ry="4.6" fill="#1e2d1a" opacity="0.55"/>
<ellipse cx="557" cy="236" rx="6.5" ry="6.4" fill="#1e2d1a" opacity="0.55"/>
<ellipse cx="494" cy="158" rx="5.6" ry="2.8" fill="#1a2a18" opacity="0.55"/>
<ellipse cx="828" cy="160" rx="6.0" ry="4.2" fill="#1a2a18" opacity="0.55"/>
<ellipse cx="601" cy="286" rx="10.7" ry="7.8" fill="#16221a" opacity="0.55"/>
<ellipse cx="848" cy="412" rx="8.8" ry="6.1" fill="#1e2d1a" opacity="0.55"/>
<ellipse cx="614" cy="258" rx="6.8" ry="3.6" fill="#1a2a18" opacity="0.55"/>
<ellipse cx="523" cy="153" rx="6.4" ry="3.5" fill="#16221a" opacity="0.55"/>
<ellipse cx="698" cy="276" rx="10.6" ry="5.7" fill="#16221a" opacity="0.55"/>
<ellipse cx="522" cy="223" rx="8.4" ry="6.8" fill="#0f1a12" opacity="0.55"/>
<ellipse cx="653" cy="138" rx="7.4" ry="5.5" fill="#1e2d1a" opacity="0.55"/>
<ellipse cx="573" cy="147" rx="9.2" ry="6.8" fill="#0f1a12" opacity="0.55"/>
<ellipse cx="760" cy="269" rx="5.4" ry="3.1" fill="#0f1a12" opacity="0.55"/>
<ellipse cx="687" cy="109" rx="7.7" ry="6.5" fill="#16221a" opacity="0.55"/>
<ellipse cx="548" cy="220" rx="5.2" ry="4.0" fill="#1a2a18" opacity="0.55"/>
<ellipse cx="803" cy="208" rx="5.6" ry="5.0" fill="#1a2a18" opacity="0.55"/>
<ellipse cx="822" cy="343" rx="5.6" ry="3.8" fill="#1e2d1a" opacity="0.55"/>
<ellipse cx="434" cy="109" rx="6.0" ry="3.6" fill="#0f1a12" opacity="0.55"/>
<ellipse cx="717" cy="213" rx="9.7" ry="9.4" fill="#0f1a12" opacity="0.55"/>
<ellipse cx="599" cy="172" rx="5.6" ry="3.7" fill="#1a2a18" opacity="0.55"/>
<ellipse cx="657" cy="423" rx="8.3" ry="6.1" fill="#16221a" opacity="0.55"/>
<ellipse cx="741" cy="362" rx="4.6" ry="4.4" fill="#16221a" opacity="0.55"/>
<ellipse cx="804" cy="346" rx="7.3" ry="5.3" fill="#1a2a18" opacity="0.55"/>
<ellipse cx="732" cy="128" rx="10.6" ry="7.8" fill="#1e2d1a" opacity="0.55"/>
<ellipse cx="785" cy="128" rx="5.1" ry="2.6" fill="#1a2a18" opacity="0.55"/>
<ellipse cx="710" cy="253" rx="8.6" ry="7.1" fill="#1e2d1a" opacity="0.55"/>
<ellipse cx="592" cy="280" rx="4.9" ry="4.4" fill="#16221a" opacity="0.55"/>
<ellipse cx="777" cy="134" rx="9.2" ry="6.6" fill="#1a2a18" opacity="0.55"/>
<ellipse cx="848" cy="371" rx="5.5" ry="3.3" fill="#0f1a12" opacity="0.55"/>
<ellipse cx="666" cy="350" rx="6.3" ry="5.8" fill="#1e2d1a" opacity="0.55"/>
<ellipse cx="450" cy="343" rx="10.3" ry="9.4" fill="#1e2d1a" opacity="0.55"/>
<ellipse cx="851" cy="143" rx="5.1" ry="4.7" fill="#16221a" opacity="0.55"/>
<ellipse cx="801" cy="300" rx="9.4" ry="5.5" fill="#1a2a18" opacity="0.55"/>
<ellipse cx="652" cy="338" rx="7.9" ry="6.6" fill="#0f1a12" opacity="0.55"/>
<ellipse cx="681" cy="258" rx="9.4" ry="5.9" fill="#16221a" opacity="0.55"/>
<ellipse cx="556" cy="353" rx="7.6" ry="6.6" fill="#16221a" opacity="0.55"/>
<ellipse cx="868" cy="245" rx="8.3" ry="7.0" fill="#1a2a18" opacity="0.55"/>
<ellipse cx="642" cy="275" rx="7.3" ry="6.2" fill="#1a2a18" opacity="0.55"/>
<ellipse cx="850" cy="409" rx="5.8" ry="5.4" fill="#1a2a18" opacity="0.55"/>
<ellipse cx="487" cy="140" rx="7.1" ry="5.9" fill="#16221a" opacity="0.55"/>
<ellipse cx="630" cy="170" rx="6.1" ry="5.8" fill="#16221a" opacity="0.55"/>
<ellipse cx="496" cy="335" rx="8.6" ry="5.4" fill="#1a2a18" opacity="0.55"/>
<ellipse cx="487" cy="253" rx="9.2" ry="6.5" fill="#16221a" opacity="0.55"/>
<ellipse cx="659" cy="425" rx="9.8" ry="8.4" fill="#1a2a18" opacity="0.55"/>
<ellipse cx="908" cy="232" rx="6.9" ry="4.6" fill="#0f1a12" opacity="0.55"/>
<ellipse cx="775" cy="106" rx="7.9" ry="6.7" fill="#1e2d1a" opacity="0.55"/>
<ellipse cx="609" cy="270" rx="6.1" ry="3.4" fill="#16221a" opacity="0.55"/>
<ellipse cx="871" cy="175" rx="10.1" ry="6.4" fill="#16221a" opacity="0.55"/>
<ellipse cx="439" cy="356" rx="5.9" ry="5.4" fill="#1a2a18" opacity="0.55"/>
<ellipse cx="837" cy="322" rx="10.6" ry="6.1" fill="#1e2d1a" opacity="0.55"/>
<ellipse cx="871" cy="287" rx="8.9" ry="5.7" fill="#16221a" opacity="0.55"/>
<ellipse cx="813" cy="160" rx="10.3" ry="10.0" fill="#0f1a12" opacity="0.55"/>
<ellipse cx="739" cy="258" rx="3.4" ry="1.8" fill="#4e6a34" opacity="0.55"/>
<ellipse cx="846" cy="185" rx="4.7" ry="4.5" fill="#3f5a2c" opacity="0.55"/>
<ellipse cx="566" cy="117" rx="5.6" ry="5.5" fill="#4e6a34" opacity="0.55"/>
<ellipse cx="896" cy="145" rx="3.9" ry="3.2" fill="#5d7436" opacity="0.55"/>
<ellipse cx="690" cy="133" rx="5.2" ry="3.3" fill="#4e6a34" opacity="0.55"/>
<ellipse cx="819" cy="299" rx="3.2" ry="2.8" fill="#55702f" opacity="0.55"/>
<ellipse cx="700" cy="130" rx="5.4" ry="3.0" fill="#3f5a2c" opacity="0.55"/>
<ellipse cx="826" cy="181" rx="5.5" ry="5.4" fill="#3f5a2c" opacity="0.55"/>
<ellipse cx="585" cy="135" rx="4.1" ry="3.8" fill="#4e6a34" opacity="0.55"/>
<ellipse cx="773" cy="224" rx="5.0" ry="5.0" fill="#5d7436" opacity="0.55"/>
<ellipse cx="834" cy="93" rx="6.1" ry="4.4" fill="#5d7436" opacity="0.55"/>
<ellipse cx="466" cy="230" rx="4.9" ry="3.9" fill="#5d7436" opacity="0.55"/>
<ellipse cx="766" cy="99" rx="3.9" ry="2.8" fill="#5d7436" opacity="0.55"/>
<ellipse cx="564" cy="292" rx="7.9" ry="4.9" fill="#5d7436" opacity="0.55"/>
<ellipse cx="895" cy="155" rx="4.8" ry="3.2" fill="#55702f" opacity="0.55"/>
<ellipse cx="480" cy="149" rx="6.3" ry="4.7" fill="#4e6a34" opacity="0.55"/>
<ellipse cx="442" cy="145" rx="3.4" ry="2.7" fill="#3f5a2c" opacity="0.55"/>
<ellipse cx="626" cy="153" rx="6.1" ry="4.9" fill="#55702f" opacity="0.55"/>
<ellipse cx="689" cy="248" rx="6.3" ry="5.5" fill="#3f5a2c" opacity="0.55"/>
<ellipse cx="779" cy="194" rx="4.4" ry="2.3" fill="#4e6a34" opacity="0.55"/>
<ellipse cx="833" cy="277" rx="6.1" ry="5.9" fill="#4e6a34" opacity="0.55"/>
<ellipse cx="795" cy="209" rx="7.1" ry="6.5" fill="#55702f" opacity="0.55"/>
<ellipse cx="715" cy="277" rx="6.4" ry="3.5" fill="#4e6a34" opacity="0.55"/>
<ellipse cx="460" cy="224" rx="7.8" ry="7.2" fill="#3f5a2c" opacity="0.55"/>
<ellipse cx="703" cy="222" rx="6.1" ry="4.6" fill="#4e6a34" opacity="0.55"/>
<ellipse cx="442" cy="258" rx="6.7" ry="5.6" fill="#55702f" opacity="0.55"/>
<ellipse cx="471" cy="245" rx="4.3" ry="3.9" fill="#55702f" opacity="0.55"/>
<ellipse cx="551" cy="249" rx="4.2" ry="3.1" fill="#3f5a2c" opacity="0.55"/>
<ellipse cx="620" cy="191" rx="6.4" ry="5.2" fill="#55702f" opacity="0.55"/>
<ellipse cx="743" cy="106" rx="3.7" ry="3.1" fill="#5d7436" opacity="0.55"/>
<ellipse cx="766" cy="220" rx="3.7" ry="1.9" fill="#3f5a2c" opacity="0.55"/>
<ellipse cx="567" cy="231" rx="6.5" ry="4.2" fill="#3f5a2c" opacity="0.55"/>
<ellipse cx="683" cy="188" rx="5.3" ry="5.3" fill="#55702f" opacity="0.55"/>
<ellipse cx="699" cy="155" rx="3.4" ry="1.7" fill="#3f5a2c" opacity="0.55"/>
<ellipse cx="656" cy="262" rx="7.8" ry="7.8" fill="#3f5a2c" opacity="0.55"/>
<ellipse cx="622" cy="282" rx="7.7" ry="6.1" fill="#55702f" opacity="0.55"/>
<ellipse cx="507" cy="200" rx="7.8" ry="6.2" fill="#4e6a34" opacity="0.55"/>
<ellipse cx="738" cy="149" rx="3.6" ry="2.2" fill="#5d7436" opacity="0.55"/>
<ellipse cx="863" cy="192" rx="3.1" ry="3.0" fill="#55702f" opacity="0.55"/>
<ellipse cx="761" cy="175" rx="6.6" ry="4.5" fill="#3f5a2c" opacity="0.55"/>
<ellipse cx="589" cy="266" rx="3.0" ry="2.8" fill="#5d7436" opacity="0.55"/>
<ellipse cx="497" cy="285" rx="6.6" ry="4.1" fill="#5d7436" opacity="0.55"/>
<ellipse cx="471" cy="172" rx="7.3" ry="5.0" fill="#55702f" opacity="0.55"/>
<ellipse cx="642" cy="148" rx="3.2" ry="1.7" fill="#55702f" opacity="0.55"/>
<ellipse cx="752" cy="223" rx="3.7" ry="2.7" fill="#5d7436" opacity="0.55"/>
<ellipse cx="589" cy="252" rx="6.9" ry="6.5" fill="#3f5a2c" opacity="0.55"/>
<ellipse cx="822" cy="222" rx="7.6" ry="6.5" fill="#4e6a34" opacity="0.55"/>
<ellipse cx="463" cy="244" rx="5.3" ry="4.3" fill="#4e6a34" opacity="0.55"/>
<ellipse cx="575" cy="100" rx="7.6" ry="4.5" fill="#4e6a34" opacity="0.55"/>
<ellipse cx="635" cy="149" rx="4.3" ry="3.0" fill="#5d7436" opacity="0.55"/>
<ellipse cx="552" cy="191" rx="6.3" ry="3.7" fill="#55702f" opacity="0.55"/>
<ellipse cx="516" cy="134" rx="7.5" ry="5.8" fill="#3f5a2c" opacity="0.55"/>
<ellipse cx="653" cy="160" rx="6.8" ry="3.9" fill="#3f5a2c" opacity="0.55"/>
<ellipse cx="531" cy="109" rx="4.7" ry="3.1" fill="#55702f" opacity="0.55"/>
<ellipse cx="613" cy="260" rx="4.0" ry="3.5" fill="#55702f" opacity="0.55"/>
<ellipse cx="634" cy="177" rx="5.6" ry="3.6" fill="#3f5a2c" opacity="0.55"/>
<ellipse cx="794" cy="195" rx="5.9" ry="3.3" fill="#5d7436" opacity="0.55"/>
<ellipse cx="677" cy="222" rx="7.3" ry="4.0" fill="#4e6a34" opacity="0.55"/>
<ellipse cx="862" cy="171" rx="6.2" ry="6.1" fill="#3f5a2c" opacity="0.55"/>
<ellipse cx="840" cy="273" rx="3.1" ry="2.2" fill="#55702f" opacity="0.55"/>
<ellipse cx="850" cy="194" rx="7.8" ry="3.9" fill="#73803a" opacity="0.6"/>
<ellipse cx="787" cy="207" rx="7.1" ry="7.0" fill="#73803a" opacity="0.6"/>
<ellipse cx="762" cy="121" rx="3.8" ry="3.7" fill="#5f7434" opacity="0.6"/>
<ellipse cx="739" cy="197" rx="6.5" ry="3.5" fill="#73803a" opacity="0.6"/>
<ellipse cx="852" cy="110" rx="3.6" ry="3.5" fill="#5f7434" opacity="0.6"/>
<ellipse cx="830" cy="142" rx="3.6" ry="2.8" fill="#73803a" opacity="0.6"/>
<ellipse cx="794" cy="190" rx="3.5" ry="2.7" fill="#73803a" opacity="0.6"/>
<ellipse cx="819" cy="151" rx="4.1" ry="2.1" fill="#5f7434" opacity="0.6"/>
<ellipse cx="811" cy="215" rx="4.4" ry="3.6" fill="#73803a" opacity="0.6"/>
<ellipse cx="870" cy="160" rx="4.2" ry="2.1" fill="#6a7c3a" opacity="0.6"/>
<ellipse cx="790" cy="178" rx="3.3" ry="2.5" fill="#6a7c3a" opacity="0.6"/>
<ellipse cx="835" cy="154" rx="4.3" ry="3.1" fill="#5f7434" opacity="0.6"/>
<ellipse cx="783" cy="162" rx="6.5" ry="4.6" fill="#5f7434" opacity="0.6"/>
<ellipse cx="836" cy="131" rx="7.0" ry="6.4" fill="#5f7434" opacity="0.6"/>
<ellipse cx="731" cy="162" rx="4.0" ry="2.5" fill="#6a7c3a" opacity="0.6"/>
<ellipse cx="758" cy="190" rx="4.5" ry="3.3" fill="#5f7434" opacity="0.6"/>
<ellipse cx="752" cy="133" rx="5.1" ry="2.7" fill="#5f7434" opacity="0.6"/>
<ellipse cx="821" cy="207" rx="3.3" ry="3.2" fill="#6a7c3a" opacity="0.6"/>
<ellipse cx="744" cy="115" rx="3.3" ry="2.4" fill="#73803a" opacity="0.6"/>
<ellipse cx="841" cy="143" rx="3.6" ry="3.4" fill="#6a7c3a" opacity="0.6"/>
<ellipse cx="776" cy="129" rx="7.7" ry="5.6" fill="#5f7434" opacity="0.6"/>
<ellipse cx="773" cy="186" rx="7.2" ry="5.2" fill="#73803a" opacity="0.6"/>
<ellipse cx="739" cy="118" rx="3.4" ry="3.3" fill="#73803a" opacity="0.6"/>
<ellipse cx="741" cy="211" rx="4.0" ry="3.6" fill="#73803a" opacity="0.6"/>
<ellipse cx="772" cy="194" rx="3.4" ry="2.5" fill="#5f7434" opacity="0.6"/>
<ellipse cx="783" cy="207" rx="4.0" ry="3.4" fill="#73803a" opacity="0.6"/>
<ellipse cx="801" cy="176" rx="4.2" ry="3.7" fill="#5f7434" opacity="0.6"/>
<ellipse cx="727" cy="114" rx="3.3" ry="2.1" fill="#6a7c3a" opacity="0.6"/>
<ellipse cx="847" cy="204" rx="4.7" ry="3.1" fill="#73803a" opacity="0.6"/>
<ellipse cx="882" cy="115" rx="6.7" ry="4.4" fill="#5f7434" opacity="0.6"/>
<ellipse cx="767" cy="110" rx="6.8" ry="6.6" fill="#5f7434" opacity="0.6"/>
<ellipse cx="731" cy="197" rx="3.5" ry="3.5" fill="#5f7434" opacity="0.6"/>
<ellipse cx="882" cy="151" rx="4.3" ry="3.9" fill="#73803a" opacity="0.6"/>
<ellipse cx="743" cy="162" rx="3.0" ry="2.0" fill="#5f7434" opacity="0.6"/>
<ellipse cx="838" cy="126" rx="4.2" ry="3.1" fill="#73803a" opacity="0.6"/>
<ellipse cx="853" cy="173" rx="5.6" ry="4.9" fill="#73803a" opacity="0.6"/>
<ellipse cx="762" cy="117" rx="3.2" ry="2.4" fill="#5f7434" opacity="0.6"/>
<ellipse cx="747" cy="155" rx="3.5" ry="2.2" fill="#6a7c3a" opacity="0.6"/>
<ellipse cx="734" cy="120" rx="5.5" ry="5.4" fill="#5f7434" opacity="0.6"/>
<ellipse cx="749" cy="124" rx="5.3" ry="3.3" fill="#5f7434" opacity="0.6"/>
</g>
<ellipse cx="402" cy="187" rx="5.0" ry="3.3" fill="#c29a3c" opacity="0.8"/>
<ellipse cx="405" cy="155" rx="5.0" ry="3.6" fill="#a68a34" opacity="0.8"/>
<ellipse cx="361" cy="144" rx="3.1" ry="2.1" fill="#a68a34" opacity="0.8"/>
<ellipse cx="386" cy="204" rx="4.0" ry="3.3" fill="#a68a34" opacity="0.8"/>
<ellipse cx="352" cy="162" rx="2.1" ry="1.6" fill="#b08e3a" opacity="0.8"/>
<ellipse cx="434" cy="192" rx="5.7" ry="5.3" fill="#b08e3a" opacity="0.8"/>
<ellipse cx="367" cy="129" rx="4.4" ry="4.2" fill="#a68a34" opacity="0.8"/>
<ellipse cx="383" cy="194" rx="3.8" ry="3.4" fill="#c29a3c" opacity="0.8"/>
<ellipse cx="416" cy="126" rx="4.5" ry="2.8" fill="#c29a3c" opacity="0.8"/>
<ellipse cx="382" cy="136" rx="2.8" ry="1.5" fill="#c29a3c" opacity="0.8"/>
<ellipse cx="424" cy="198" rx="5.3" ry="3.7" fill="#c29a3c" opacity="0.8"/>
<ellipse cx="383" cy="175" rx="2.3" ry="2.1" fill="#b08e3a" opacity="0.8"/>
<ellipse cx="403" cy="130" rx="2.4" ry="2.0" fill="#8e7a30" opacity="0.8"/>
<ellipse cx="358" cy="168" rx="4.6" ry="3.9" fill="#8e7a30" opacity="0.8"/>
<ellipse cx="387" cy="148" rx="3.2" ry="2.1" fill="#b08e3a" opacity="0.8"/>
<ellipse cx="405" cy="154" rx="3.7" ry="3.0" fill="#c29a3c" opacity="0.8"/>
<ellipse cx="385" cy="157" rx="5.8" ry="5.5" fill="#8e7a30" opacity="0.8"/>
<ellipse cx="389" cy="191" rx="3.6" ry="2.6" fill="#c29a3c" opacity="0.8"/>
<ellipse cx="359" cy="126" rx="4.2" ry="2.3" fill="#8e7a30" opacity="0.8"/>
<ellipse cx="412" cy="155" rx="4.0" ry="2.7" fill="#a68a34" opacity="0.8"/>
<ellipse cx="359" cy="139" rx="2.3" ry="1.7" fill="#8e7a30" opacity="0.8"/>
<ellipse cx="433" cy="202" rx="2.8" ry="2.6" fill="#a68a34" opacity="0.8"/>
<ellipse cx="345" cy="198" rx="3.3" ry="1.8" fill="#8e7a30" opacity="0.8"/>
<ellipse cx="422" cy="180" rx="5.6" ry="4.5" fill="#a68a34" opacity="0.8"/>
<ellipse cx="411" cy="141" rx="3.9" ry="2.0" fill="#a68a34" opacity="0.8"/>
<ellipse cx="448" cy="138" rx="3.4" ry="2.1" fill="#a68a34" opacity="0.8"/>
<ellipse cx="423" cy="197" rx="2.2" ry="1.8" fill="#b08e3a" opacity="0.8"/>
<ellipse cx="377" cy="156" rx="3.8" ry="3.2" fill="#c29a3c" opacity="0.8"/>
<ellipse cx="375" cy="145" rx="3.6" ry="2.6" fill="#c29a3c" opacity="0.8"/>
<ellipse cx="390" cy="127" rx="4.5" ry="3.3" fill="#8e7a30" opacity="0.8"/>
<ellipse cx="391" cy="174" rx="5.3" ry="4.8" fill="#a68a34" opacity="0.8"/>
<ellipse cx="386" cy="130" rx="3.4" ry="1.9" fill="#c29a3c" opacity="0.8"/>
<ellipse cx="391" cy="166" rx="2.2" ry="1.2" fill="#a68a34" opacity="0.8"/>
<ellipse cx="424" cy="187" rx="4.0" ry="3.5" fill="#b08e3a" opacity="0.8"/>
<ellipse cx="443" cy="177" rx="5.1" ry="4.8" fill="#b08e3a" opacity="0.8"/>
<ellipse cx="505" cy="79" rx="4.4" ry="2.5" fill="#b5a530" opacity="0.85"/>
<ellipse cx="501" cy="59" rx="4.4" ry="3.7" fill="#b5a530" opacity="0.85"/>
<ellipse cx="495" cy="55" rx="4.5" ry="4.0" fill="#c4b238" opacity="0.85"/>
<ellipse cx="476" cy="87" rx="2.8" ry="1.6" fill="#a99a2c" opacity="0.85"/>
<ellipse cx="488" cy="88" rx="2.6" ry="2.1" fill="#a99a2c" opacity="0.85"/>
<ellipse cx="478" cy="62" rx="2.6" ry="1.5" fill="#a99a2c" opacity="0.85"/>
<ellipse cx="503" cy="77" rx="4.7" ry="4.2" fill="#b5a530" opacity="0.85"/>
<ellipse cx="479" cy="81" rx="2.1" ry="2.1" fill="#a99a2c" opacity="0.85"/>
<ellipse cx="486" cy="70" rx="4.1" ry="2.5" fill="#b5a530" opacity="0.85"/>
<ellipse cx="489" cy="85" rx="4.2" ry="2.7" fill="#a99a2c" opacity="0.85"/>
<ellipse cx="505" cy="72" rx="3.1" ry="2.2" fill="#b5a530" opacity="0.85"/>
<ellipse cx="476" cy="80" rx="2.1" ry="1.3" fill="#c4b238" opacity="0.85"/>
<ellipse cx="492" cy="91" rx="3.8" ry="3.6" fill="#c4b238" opacity="0.85"/>
<ellipse cx="496" cy="80" rx="2.7" ry="2.2" fill="#a99a2c" opacity="0.85"/>
<ellipse cx="485" cy="69" rx="4.7" ry="3.5" fill="#b5a530" opacity="0.85"/>
<ellipse cx="491" cy="47" rx="2.2" ry="1.5" fill="#c4b238" opacity="0.85"/>
<ellipse cx="525" cy="121" rx="2.7" ry="2.1" fill="#7b7d30" opacity="0.8"/>
<ellipse cx="529" cy="129" rx="3.4" ry="1.7" fill="#8a8a32" opacity="0.8"/>
<ellipse cx="556" cy="131" rx="3.4" ry="2.7" fill="#8a8a32" opacity="0.8"/>
<ellipse cx="559" cy="133" rx="3.2" ry="3.2" fill="#7b7d30" opacity="0.8"/>
<ellipse cx="523" cy="135" rx="4.7" ry="3.7" fill="#7b7d30" opacity="0.8"/>
<ellipse cx="543" cy="125" rx="2.5" ry="1.3" fill="#8a8a32" opacity="0.8"/>
<ellipse cx="544" cy="122" rx="2.7" ry="2.6" fill="#8a8a32" opacity="0.8"/>
<ellipse cx="525" cy="128" rx="4.0" ry="2.3" fill="#8a8a32" opacity="0.8"/>
<ellipse cx="529" cy="128" rx="3.5" ry="3.2" fill="#7b7d30" opacity="0.8"/>
<ellipse cx="528" cy="119" rx="2.9" ry="2.9" fill="#8a8a32" opacity="0.8"/>
<ellipse cx="553" cy="124" rx="3.6" ry="3.3" fill="#7b7d30" opacity="0.8"/>
<ellipse cx="554" cy="124" rx="4.2" ry="2.5" fill="#7b7d30" opacity="0.8"/>
<ellipse cx="565" cy="118" rx="3.9" ry="2.6" fill="#8a8a32" opacity="0.8"/>
<ellipse cx="554" cy="131" rx="4.5" ry="2.9" fill="#8a8a32" opacity="0.8"/>
<ellipse cx="857" cy="381" rx="6.2" ry="4.0" fill="#c5b258" opacity="0.85"/>
<ellipse cx="902" cy="419" rx="3.3" ry="2.0" fill="#b9a74e" opacity="0.85"/>
<ellipse cx="899" cy="415" rx="3.8" ry="3.3" fill="#a59a45" opacity="0.85"/>
<ellipse cx="830" cy="418" rx="4.3" ry="3.0" fill="#a59a45" opacity="0.85"/>
<ellipse cx="893" cy="421" rx="6.9" ry="5.1" fill="#8c8a3c" opacity="0.85"/>
<ellipse cx="854" cy="346" rx="3.1" ry="2.4" fill="#a59a45" opacity="0.85"/>
<ellipse cx="827" cy="363" rx="5.5" ry="4.3" fill="#b9a74e" opacity="0.85"/>
<ellipse cx="811" cy="348" rx="3.4" ry="2.3" fill="#a59a45" opacity="0.85"/>
<ellipse cx="807" cy="347" rx="3.2" ry="2.7" fill="#b9a74e" opacity="0.85"/>
<ellipse cx="879" cy="350" rx="5.4" ry="3.2" fill="#c5b258" opacity="0.85"/>
<ellipse cx="906" cy="389" rx="5.7" ry="3.1" fill="#8c8a3c" opacity="0.85"/>
<ellipse cx="815" cy="354" rx="3.1" ry="2.9" fill="#b9a74e" opacity="0.85"/>
<ellipse cx="866" cy="369" rx="3.4" ry="3.0" fill="#b9a74e" opacity="0.85"/>
<ellipse cx="868" cy="369" rx="4.3" ry="2.2" fill="#c5b258" opacity="0.85"/>
<ellipse cx="821" cy="368" rx="5.9" ry="5.6" fill="#c5b258" opacity="0.85"/>
<ellipse cx="883" cy="395" rx="4.9" ry="4.0" fill="#c5b258" opacity="0.85"/>
<ellipse cx="794" cy="379" rx="4.7" ry="3.2" fill="#b9a74e" opacity="0.85"/>
<ellipse cx="875" cy="390" rx="3.9" ry="3.0" fill="#b9a74e" opacity="0.85"/>
<ellipse cx="825" cy="381" rx="5.1" ry="4.5" fill="#c5b258" opacity="0.85"/>
<ellipse cx="908" cy="345" rx="5.0" ry="4.2" fill="#8c8a3c" opacity="0.85"/>
<ellipse cx="890" cy="425" rx="5.4" ry="4.2" fill="#c5b258" opacity="0.85"/>
<ellipse cx="809" cy="413" rx="6.8" ry="5.1" fill="#a59a45" opacity="0.85"/>
<ellipse cx="803" cy="398" rx="3.3" ry="2.7" fill="#b9a74e" opacity="0.85"/>
<ellipse cx="833" cy="378" rx="4.6" ry="3.3" fill="#b9a74e" opacity="0.85"/>
<ellipse cx="868" cy="376" rx="4.2" ry="4.0" fill="#8c8a3c" opacity="0.85"/>
<ellipse cx="851" cy="376" rx="6.5" ry="6.4" fill="#a59a45" opacity="0.85"/>
<ellipse cx="805" cy="394" rx="5.8" ry="3.9" fill="#b9a74e" opacity="0.85"/>
<ellipse cx="830" cy="358" rx="6.4" ry="3.7" fill="#c5b258" opacity="0.85"/>
<ellipse cx="843" cy="409" rx="5.3" ry="3.5" fill="#a59a45" opacity="0.85"/>
<ellipse cx="868" cy="403" rx="5.0" ry="3.3" fill="#c5b258" opacity="0.85"/>
<ellipse cx="875" cy="415" rx="3.6" ry="3.6" fill="#a59a45" opacity="0.85"/>
<ellipse cx="878" cy="395" rx="4.4" ry="2.9" fill="#a59a45" opacity="0.85"/>
<ellipse cx="813" cy="426" rx="5.9" ry="3.4" fill="#b9a74e" opacity="0.85"/>
<ellipse cx="870" cy="361" rx="3.6" ry="3.2" fill="#a59a45" opacity="0.85"/>
<ellipse cx="879" cy="381" rx="3.8" ry="2.4" fill="#b9a74e" opacity="0.85"/>
<ellipse cx="897" cy="384" rx="3.1" ry="2.6" fill="#8c8a3c" opacity="0.85"/>
<ellipse cx="851" cy="397" rx="4.9" ry="3.1" fill="#a59a45" opacity="0.85"/>
<ellipse cx="879" cy="345" rx="4.0" ry="3.4" fill="#8c8a3c" opacity="0.85"/>
<ellipse cx="861" cy="399" rx="6.4" ry="5.4" fill="#a59a45" opacity="0.85"/>
<ellipse cx="868" cy="383" rx="4.3" ry="4.0" fill="#b9a74e" opacity="0.85"/>
<ellipse cx="710" cy="324" rx="4.1" ry="2.6" fill="#7a7c38" opacity="0.8"/>
<ellipse cx="722" cy="326" rx="3.9" ry="2.9" fill="#86843a" opacity="0.8"/>
<ellipse cx="737" cy="341" rx="4.7" ry="4.2" fill="#86843a" opacity="0.8"/>
<ellipse cx="719" cy="327" rx="4.9" ry="3.1" fill="#7a7c38" opacity="0.8"/>
<ellipse cx="709" cy="335" rx="4.9" ry="3.7" fill="#7a7c38" opacity="0.8"/>
<ellipse cx="701" cy="330" rx="3.6" ry="2.7" fill="#86843a" opacity="0.8"/>
<ellipse cx="735" cy="339" rx="3.6" ry="3.1" fill="#86843a" opacity="0.8"/>
<ellipse cx="724" cy="345" rx="2.6" ry="2.2" fill="#7a7c38" opacity="0.8"/>
<ellipse cx="734" cy="332" rx="2.8" ry="1.9" fill="#86843a" opacity="0.8"/>
<ellipse cx="696" cy="325" rx="3.3" ry="2.6" fill="#86843a" opacity="0.8"/>
<ellipse cx="702" cy="321" rx="3.2" ry="3.2" fill="#7a7c38" opacity="0.8"/>
<ellipse cx="756" cy="326" rx="2.5" ry="2.3" fill="#7a7c38" opacity="0.8"/>
<ellipse cx="735" cy="326" rx="3.7" ry="3.3" fill="#7a7c38" opacity="0.8"/>
<ellipse cx="704" cy="333" rx="4.5" ry="3.3" fill="#86843a" opacity="0.8"/>
<ellipse cx="711" cy="405" rx="2.4" ry="1.6" fill="#7c7a36" opacity="0.7"/>
<ellipse cx="750" cy="392" rx="3.1" ry="3.1" fill="#7c7a36" opacity="0.7"/>
<ellipse cx="738" cy="402" rx="4.4" ry="3.0" fill="#7c7a36" opacity="0.7"/>
<ellipse cx="736" cy="394" rx="3.5" ry="2.9" fill="#6e7134" opacity="0.7"/>
<ellipse cx="715" cy="422" rx="4.6" ry="2.5" fill="#6e7134" opacity="0.7"/>
<ellipse cx="730" cy="395" rx="4.8" ry="3.9" fill="#7c7a36" opacity="0.7"/>
<ellipse cx="691" cy="381" rx="4.9" ry="3.0" fill="#7c7a36" opacity="0.7"/>
<ellipse cx="697" cy="386" rx="2.7" ry="1.8" fill="#7c7a36" opacity="0.7"/>
<ellipse cx="701" cy="421" rx="4.4" ry="3.5" fill="#6e7134" opacity="0.7"/>
<ellipse cx="738" cy="424" rx="2.3" ry="1.4" fill="#7c7a36" opacity="0.7"/>
<ellipse cx="738" cy="404" rx="4.2" ry="3.5" fill="#7c7a36" opacity="0.7"/>
<ellipse cx="698" cy="385" rx="3.3" ry="2.4" fill="#6e7134" opacity="0.7"/>
<ellipse cx="729" cy="402" rx="4.7" ry="2.9" fill="#7c7a36" opacity="0.7"/>
<ellipse cx="702" cy="407" rx="4.2" ry="3.9" fill="#6e7134" opacity="0.7"/>
<ellipse cx="467" cy="302" rx="4.0" ry="2.7" fill="#8a8034" opacity="0.7"/>
<ellipse cx="458" cy="364" rx="2.2" ry="1.5" fill="#6f7a30" opacity="0.7"/>
<ellipse cx="498" cy="218" rx="2.1" ry="2.1" fill="#6f7a30" opacity="0.7"/>
<ellipse cx="443" cy="367" rx="3.5" ry="3.1" fill="#8a8034" opacity="0.7"/>
<ellipse cx="410" cy="248" rx="3.2" ry="2.2" fill="#7f7d33" opacity="0.7"/>
<ellipse cx="536" cy="272" rx="3.4" ry="2.7" fill="#6f7a30" opacity="0.7"/>
<ellipse cx="545" cy="259" rx="3.0" ry="2.4" fill="#8a8034" opacity="0.7"/>
<ellipse cx="530" cy="260" rx="4.5" ry="3.0" fill="#8a8034" opacity="0.7"/>
<ellipse cx="557" cy="350" rx="3.0" ry="2.5" fill="#7f7d33" opacity="0.7"/>
<ellipse cx="524" cy="266" rx="3.0" ry="1.7" fill="#8a8034" opacity="0.7"/>
<ellipse cx="555" cy="229" rx="5.0" ry="4.3" fill="#8a8034" opacity="0.7"/>
<ellipse cx="540" cy="300" rx="2.1" ry="1.2" fill="#8a8034" opacity="0.7"/>
<ellipse cx="393" cy="342" rx="3.4" ry="1.8" fill="#6f7a30" opacity="0.7"/>
<ellipse cx="473" cy="299" rx="3.1" ry="2.5" fill="#7f7d33" opacity="0.7"/>
<ellipse cx="507" cy="307" rx="4.0" ry="2.1" fill="#7f7d33" opacity="0.7"/>
<ellipse cx="496" cy="312" rx="2.5" ry="1.5" fill="#6f7a30" opacity="0.7"/>
<ellipse cx="391" cy="335" rx="4.7" ry="2.4" fill="#6f7a30" opacity="0.7"/>
<ellipse cx="538" cy="236" rx="2.9" ry="1.8" fill="#6f7a30" opacity="0.7"/>
<ellipse cx="438" cy="280" rx="3.0" ry="2.3" fill="#8a8034" opacity="0.7"/>
<ellipse cx="486" cy="357" rx="3.5" ry="1.8" fill="#6f7a30" opacity="0.7"/>
<ellipse cx="406" cy="341" rx="3.7" ry="2.7" fill="#8a8034" opacity="0.7"/>
<ellipse cx="387" cy="275" rx="3.8" ry="3.7" fill="#6f7a30" opacity="0.7"/>
<ellipse cx="468" cy="279" rx="2.3" ry="1.7" fill="#6f7a30" opacity="0.7"/>
<ellipse cx="542" cy="312" rx="3.3" ry="2.8" fill="#7f7d33" opacity="0.7"/>
<ellipse cx="406" cy="365" rx="2.3" ry="1.3" fill="#7f7d33" opacity="0.7"/>
<ellipse cx="821" cy="12" rx="2.7" ry="2.6" fill="#c29f2e" opacity="0.9"/>
<ellipse cx="836" cy="12" rx="4.1" ry="3.5" fill="#c29f2e" opacity="0.9"/>
<ellipse cx="824" cy="10" rx="4.1" ry="3.4" fill="#b89a2d" opacity="0.9"/>
<ellipse cx="860" cy="15" rx="2.2" ry="1.1" fill="#c29f2e" opacity="0.9"/>
<ellipse cx="821" cy="10" rx="4.5" ry="3.1" fill="#c29f2e" opacity="0.9"/>
<ellipse cx="834" cy="10" rx="4.9" ry="3.9" fill="#b89a2d" opacity="0.9"/>
<ellipse cx="834" cy="15" rx="4.2" ry="3.5" fill="#b89a2d" opacity="0.9"/>
<ellipse cx="827" cy="13" rx="3.1" ry="2.5" fill="#c29f2e" opacity="0.9"/>
<ellipse cx="839" cy="6" rx="4.4" ry="3.9" fill="#b89a2d" opacity="0.9"/>
<ellipse cx="846" cy="5" rx="2.2" ry="2.0" fill="#b89a2d" opacity="0.9"/>
</g>
<g mask="url(#mforest)"><rect width="911" height="428" filter="url(#texD)" opacity="0.62"/></g>
<g mask="url(#mrocks)"><rect width="911" height="428" filter="url(#texD)" opacity="0.34"/></g>
<g mask="url(#mrocks)"><rect width="911" height="428" filter="url(#texL)" opacity="0.22"/><rect width="911" height="428" filter="url(#texG)" opacity="0.5"/></g>
<g mask="url(#mforest)"><rect width="911" height="428" filter="url(#texF)" opacity="0.3"/></g>
<g filter="url(#fb5)">
<ellipse cx="490" cy="404" rx="50" ry="30" fill="#0a140e" opacity="0.77"/>
<ellipse cx="870" cy="10" rx="60" ry="16" fill="#0e140c" opacity="0.77"/>
<ellipse cx="706" cy="258" rx="44" ry="36" fill="#121c12" opacity="0.42"/>
<ellipse cx="470" cy="118" rx="26" ry="18" fill="#16241a" opacity="0.68"/>
<ellipse cx="760" cy="330" rx="30" ry="24" fill="#152016" opacity="0.59"/>
<ellipse cx="560" cy="250" rx="30" ry="40" fill="#14221a" opacity="0.51"/>
<ellipse cx="660" cy="130" rx="40" ry="24" fill="#1c2a20" opacity="0.51"/>
<ellipse cx="440" cy="60" rx="16" ry="40" fill="#1a2a1c" opacity="0.59"/>
<ellipse cx="530" cy="20" rx="18" ry="20" fill="#18261a" opacity="0.59"/>
<ellipse cx="600" cy="70" rx="16" ry="40" fill="#1a2a1e" opacity="0.51"/>
<ellipse cx="840" cy="110" rx="30" ry="20" fill="#1c2a1a" opacity="0.51"/>
</g>
<g filter="url(#fb06)">
<path d="M636,186 Q650,178 659,190 L660,232 Q656,250 646,254 L640,250 L641,214 Z" fill="#d32a1c"/>
<path d="M645,196 L656,196 L656,236 L646,240 Z" fill="#8e2a22" opacity="0.7"/>
<path d="M622,178 Q632,170 640,182 L640,200 L626,198 Z" fill="#c4241b"/>
<ellipse cx="622" cy="197" rx="6" ry="10" fill="#7a4a32"/>
<ellipse cx="620" cy="193" rx="3.6" ry="4.6" fill="#d9a98c"/>
<path d="M616,206 L618,160" stroke="#e3b79b" stroke-width="4.2" stroke-linecap="round" fill="none"/>
<path d="M636,204 L646,176 L660,169" stroke="#e3b79b" stroke-width="4.2" stroke-linecap="round" stroke-linejoin="round" fill="none"/>
<path d="M613,208 Q626,200 638,210 L639,244 L614,244 Z" fill="#ece8ec"/>
<path d="M617,243 L640,243 L643,302 L633,302 L630,262 L628,302 L619,302 Z" fill="#b5cdd3"/>
<path d="M617,301 L629,301 L629,311 L614,311 Z" fill="#17140f"/><path d="M632,301 L644,301 L645,312 L631,312 Z" fill="#17140f"/>
</g>
<mask id="mdk" maskUnits="userSpaceOnUse" x="0" y="0" width="911" height="428"><path d="M118,318 L420,322 L436,380 L442,428 L150,428 L110,400 Z" fill="#fff" filter="url(#rough)"/></mask>
<mask id="mor" maskUnits="userSpaceOnUse" x="0" y="0" width="911" height="428"><path d="M51,322 L122,318 L124,340 L100,350 L92,372 L98,398 L116,402 L116,421 L62,423 L50,404 L54,380 L49,356 Z" fill="#fff" filter="url(#rough)"/></mask>
<rect x="100" y="300" width="360" height="128" fill="url(#dotsk)" mask="url(#mdk)" opacity="0.7"/>
<rect x="40" y="300" width="100" height="128" fill="#c98a1e" mask="url(#mor)" opacity="0.16"/>
<rect x="40" y="300" width="100" height="128" fill="url(#dots)" mask="url(#mor)"/>
<g filter="url(#rough)"><path d="M99,349 L126,332 Q190,327 258,329 L268,341 Q330,339 381,342 Q391,350 389,362 Q388,374 380,378 L352,390 L310,404 L289,415 Q240,420 185,418 L133,406 L91,398 Q82,380 84,361 Z" fill="#f2f0ed"/></g>
<text x="101.5" y="381" font-family="'Liberation Sans','DejaVu Sans',sans-serif" font-weight="700" font-size="30.5" letter-spacing="0" fill="#0b0b0b" stroke="#0b0b0b" stroke-width="1.7" stroke-linejoin="round">There are no limits</text>
</svg></div>

  <div id="nav">
    <div class="tab" style="left:0"><span>Files</span></div>
    <div class="tab" style="left:300.6px"><span>Templates</span></div>
    <div class="tab" style="left:601.2px"><span>Music</span></div>
    <div class="tab" style="left:901.8px"><span>Preview</span></div>
    <div class="tab" style="left:1202.4px"><span>Export</span></div>
  </div>
  <div id="underline"></div>

  <div id="track"></div>
  <div id="prog"></div>
  <div id="knob"></div>
  <div id="time">00:00:20<i>.353</i></div>

  <div id="bar"></div>
  <div class="btn" id="back">Back</div>
  <div class="btn" id="next">Next</div>
</div>
<svg id="icons" viewBox="0 0 1920 1080" width="1920" height="1080" style="position:absolute;left:0;top:0;pointer-events:none">
<g fill="none" stroke="#d0d2e1" stroke-width="2.3" stroke-linejoin="round" stroke-linecap="round">
  <!-- Files: folder with plus -->
  <path d="M344.2,143.8 L344.2,116.4 L352.4,116.4 L355,119 L374,119 L374,143.8 Z"/>
  <path d="M344.2,116.6 L352.2,116.6 L354.6,118.8" stroke-width="3"/>
  <path d="M352.6,131.2 L366,131.2 M359.3,124.5 L359.3,137.9" stroke-width="2"/>
  <!-- Templates: stacked frames with star -->
  <path d="M649,116.4 L672.4,116.4 Q674.4,116.4 674.4,118.4 L674.4,134.6"/>
  <rect x="644.4" y="121.2" width="25.8" height="22.8" rx="1.6"/>
  <!-- Music -->
  <path d="M953.8,140.6 L953.8,121.6 L974.2,116.2 L974.2,136.6"/>
  <!-- Preview -->
  <rect x="1245.4" y="117.2" width="30.4" height="25.8" rx="1.8" stroke-width="2.5"/>
  <!-- Export -->
  <path d="M1549.8,135.2 L1549.8,141.2 Q1549.8,142.7 1551.3,142.7 L1572.5,142.7 Q1574,142.7 1574,141.2 L1574,135.2"/>
  <path d="M1561.8,135 L1561.8,116.6 M1555.6,122.6 L1561.8,116.4 L1568,122.6"/>
</g>
<g fill="#d0d2e1">
  <path d="M656.9,125.2 L659.1,129.8 L664.2,130.5 L660.5,134 L661.4,139 L656.9,136.6 L652.4,139 L653.3,134 L649.6,130.5 L654.7,129.8 Z" stroke="#d5d7e6" stroke-width="1" stroke-linejoin="round"/>
  <circle cx="949.7" cy="140.6" r="4.2"/>
  <circle cx="970.3" cy="136.7" r="4.2"/>
  <path d="M1256.8,124.2 L1266.6,130.2 L1256.8,136.3 Z"/>
  <!-- transport -->
  <rect x="1215.4" y="899.6" width="2.8" height="13.8" rx="0.6"/>
  <path d="M1220,906.5 L1229.6,899.6 L1229.6,913.5 Z"/>
  <path d="M1245.6,897 L1262.2,906.6 L1245.6,916.2 Z"/>
  <path d="M1277.8,899.6 L1287.4,906.5 L1277.8,913.5 Z"/>
  <rect x="1289.3" y="899.6" width="2.8" height="13.8" rx="0.6"/>
</g>
<!-- volume -->
<g fill="none" stroke="#dcdcec" stroke-width="2.1" stroke-linejoin="round" stroke-linecap="round">
  <path d="M1674.6,898.6 L1674.6,914.6 L1671.8,910.4 L1666.6,910.4 Q1662.4,910.4 1662.4,906.5 Q1662.4,902.6 1666.6,902.6 L1671.8,902.6 Z"/>
  <path d="M1678.4,904.2 Q1680,906.5 1678.4,908.8"/>
  <path d="M1679.4,900.6 Q1686.2,906.6 1679.4,912.8"/>
</g>
<!-- download glyphs -->
<g fill="none" stroke="#ffffff" stroke-width="2.2" stroke-linecap="round" stroke-linejoin="round">
  <g id="dlg"><path d="M385.6,494.6 L385.6,502 M381.6,498.6 L385.6,502.6 L389.6,498.6"/><path d="M380.9,506.4 L390.3,506.4" stroke-width="2.4" stroke-linecap="butt"/></g>
  <use href="#dlg" y="112"/>
  <use href="#dlg" y="336"/>
</g>
</svg>

</body>
</html>
